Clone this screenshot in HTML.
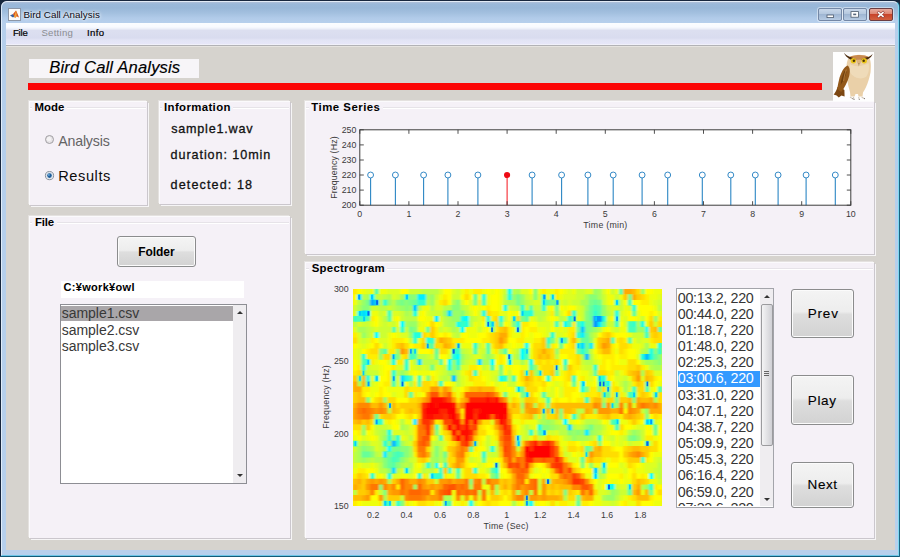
<!DOCTYPE html>
<html><head><meta charset="utf-8"><title>Bird Call Analysis</title><style>
html,body{margin:0;padding:0}
body{width:900px;height:557px;overflow:hidden;position:relative;background:#a9c4e3;font-family:"Liberation Sans",sans-serif}
.abs,.t,.panel,.btn,.lb,.lb>*,.etch{position:absolute}
.t{white-space:nowrap;line-height:1;display:block}
#frame{position:absolute;left:0;top:0;width:897.5px;height:554.5px;border-style:solid;border-color:#17263d #1b6483 #125a78 #17263d;border-width:1px 1.5px 1.5px 1px;border-radius:7px 7px 1px 1px;
 background:linear-gradient(#c5d3e6 0px,#a9bdd8 1.5px,#9ab8d9 3px,#98b7d8 7px,#a3c0df 12px,#b1cbe9 17px,#b6cfec 21px,#b4ceeb 60px,#b7d0ec 100%);}
#frame:before{content:"";position:absolute;left:0;top:0;right:0;bottom:0;border:1px solid rgba(235,243,252,.8);border-right-color:#7fd8f0;border-bottom-color:#6cc6e6;border-radius:6px 6px 0 0}
#corner{position:absolute;left:0;top:0;width:900px;height:8px;background:#16263b}
#bottomline{display:none}
#menubar{position:absolute;left:6px;top:23px;width:888.5px;height:22px;
 background:linear-gradient(#fbfdff 0,#f8faff 4px,#eef1fa 5.5px,#dcdff0 7.5px,#d9dcef 15px,#e2e4f5 17px,#e6e6f8 20.5px,#f6f6fb 22px);border-bottom:1px solid #b2b2b6}
#client{position:absolute;left:6px;top:46px;width:888.5px;height:504px;background:#d6d3ce;box-shadow:inset 0 1px 0 0 #e6e4e0}
#redge{position:absolute;left:894.5px;top:24px;width:1.5px;height:527px;background:#a8e2f2;opacity:.7}
.panel{background:#f5f1f7;box-shadow:inset 1px 1px 0 0 #fbfafc, 1px 1px 0 0 #cbc7cd, 2px 2px 0 0 #f6f5f6, -1px -1px 0 0 #e4e1df}
.etch{height:1px;background:#e6e3e8;border-bottom:1px solid #fff}
.btn{border:1px solid #8b8c8d;border-radius:3px;background:linear-gradient(#f4f4f4 0,#ededed 46%,#dedede 52%,#d2d2d2 100%);box-shadow:inset 0 0 0 1px #fbfbfb}
.lb{background:#fff;border:1px solid #8d8e94;box-sizing:content-box}
.sb{background:#efedf0}
.thumb{border:1px solid #9b9b9e;border-radius:2px;background:linear-gradient(90deg,#f4f4f5,#e2e2e5 50%,#d0d0d5)}
.grip{width:5px;height:1px;background:#666;box-shadow:0 2px 0 #666,0 4px 0 #666}
.arr{width:0;height:0;border-left:3px solid transparent;border-right:3px solid transparent}
.arr.up{border-bottom:3.5px solid #333}
.arr.dn{border-top:3.5px solid #333}
.wb{position:absolute;top:8px;height:11px;width:22px;border:1px solid #7488a6;border-radius:2px;
 background:linear-gradient(#c9d8ea 0,#b4c7de 45%,#9fb6d3 50%,#b7cbe3 100%);box-shadow:0 0 0 1px rgba(255,255,255,.45)}
</style></head><body>
<div id="corner"></div><div id="frame"></div><div id="bottomline"></div>
<svg class="abs" style="left:8px;top:8px" width="13" height="13" viewBox="0 0 13 13"><rect x=".5" y=".5" width="12" height="12" fill="#fbfbfb" stroke="#8c96a6"/>
<path d="M2 7.5L5 6L7 8L5 9.5Z" fill="#3a5f9e"/><path d="M5 6L8 2.5C9 4 10 7 11 9.5L8.5 8.2L7 10L6 8Z" fill="#d9541e"/><path d="M8 2.5C8.6 4.5 8.8 6.5 8.5 8.2L7 10L6.2 8.2Z" fill="#f0a23a"/></svg>
<span class="t " style="left:23.50px;top:10.20px;font-size:9.80px;color:#0a0a14;letter-spacing:0.035px;text-shadow:0 0 3px #fff,0 0 4px #fff;">Bird Call Analysis</span>
<div class="wb" style="left:818px"></div><div class="wb" style="left:843px"></div>
<div class="wb" style="left:869px;border-color:#6b3d42;background:linear-gradient(#e8aa9e 0,#dd8672 45%,#c8442b 50%,#d2603f 100%)"></div>
<svg class="abs" style="left:818px;top:8px" width="76" height="13" viewBox="0 0 76 13">
<rect x="9" y="7" width="6.5" height="2.6" fill="#fff" stroke="#4d5a6c" stroke-width=".8"/>
<rect x="33" y="3.6" width="7.5" height="5.6" fill="#fff" stroke="#4d5a6c" stroke-width=".8"/><rect x="35.2" y="5.6" width="3" height="1.6" fill="#56657a"/>
<path d="M60.6 4.6l4.4 3.8M65 4.6l-4.4 3.8" stroke="#8a3a34" stroke-width="2.6" stroke-linecap="square"/>
<path d="M60.6 4.6l4.4 3.8M65 4.6l-4.4 3.8" stroke="#fff" stroke-width="1.5" stroke-linecap="square"/></svg>
<div id="menubar"></div><div id="client"></div>
<span class="t " style="left:12.90px;top:28.27px;font-size:9.60px;color:#000;letter-spacing:-0.156px;-webkit-text-stroke:0.2px #000;">File</span>
<span class="t " style="left:41.40px;top:28.27px;font-size:9.60px;color:#8b8d92;letter-spacing:0.269px;">Setting</span>
<span class="t " style="left:86.90px;top:28.27px;font-size:9.60px;color:#000;letter-spacing:0.429px;-webkit-text-stroke:0.2px #000;">Info</span>
<div class="abs" style="left:29px;top:59px;width:170px;height:19px;background:#f7f5f8"></div>
<span class="t " style="left:49.20px;top:59.95px;font-size:16.60px;color:#000;font-style:italic;letter-spacing:0.145px;-webkit-text-stroke:0.15px #000;">Bird Call Analysis</span>
<div class="abs" style="left:28px;top:83px;width:794px;height:7px;background:#fb0505"></div>
<div class="panel" style="left:29px;top:101px;width:118px;height:104px"><i class="etch" style="left:1px;width:2px;top:6px"></i><i class="etch" style="left:38px;right:1px;top:6px"></i></div><span class="t " style="left:34.50px;top:101.85px;font-size:11.40px;color:#000;font-weight:bold;letter-spacing:0.045px;">Mode</span>
<div class="panel" style="left:159px;top:101px;width:131px;height:103px"><i class="etch" style="left:1px;width:2px;top:6px"></i><i class="etch" style="left:74px;right:1px;top:6px"></i></div><span class="t " style="left:164.00px;top:101.85px;font-size:11.40px;color:#000;font-weight:bold;letter-spacing:0.381px;">Information</span>
<div class="panel" style="left:29px;top:216px;width:261px;height:322px"><i class="etch" style="left:1px;width:2px;top:6px"></i><i class="etch" style="left:28px;right:1px;top:6px"></i></div><span class="t " style="left:34.90px;top:216.95px;font-size:11.40px;color:#000;font-weight:bold;letter-spacing:-0.113px;">File</span>
<div class="panel" style="left:305px;top:101px;width:569px;height:153px"><i class="etch" style="left:1px;width:3px;top:6px"></i><i class="etch" style="left:78px;right:1px;top:6px"></i></div><span class="t " style="left:311.30px;top:102.15px;font-size:11.40px;color:#000;font-weight:bold;letter-spacing:0.490px;">Time Series</span>
<div class="panel" style="left:305px;top:262px;width:569px;height:276px"><i class="etch" style="left:1px;width:3px;top:6px"></i><i class="etch" style="left:82px;right:1px;top:6px"></i></div><span class="t " style="left:311.70px;top:263.05px;font-size:11.40px;color:#000;font-weight:bold;letter-spacing:0.268px;">Spectrogram</span>
<svg class="abs" style="left:833px;top:52px" width="41" height="49" viewBox="0 0 41 49">
<rect width="41" height="49" fill="#fefefe"/>
<path d="M4.5 35C3.5 38.5 2 41 0.6 42.6L3.6 43.4L5.8 45.4L8.4 43.6L11.6 44.6L11.4 38L8 35.5Z" fill="#7c4712"/>
<path d="M16 5.5C14 8 13.4 12 13.6 16C13.4 24 14.4 32 17 40L17.5 44.5L21.5 44.5L22.5 42L25 42L25.5 44.5L29.5 44.5L30 40.5C33 36 36 29 37.6 20C38.2 13 38 8.5 36 5.4C31 2 21 2 16 5.5Z" fill="#ead0a8"/>
<path d="M17 12C20 15 30 15 35.5 11C36.5 16 36 21 33 25C28 28 20 26 17 20Z" fill="#f1dfc0" opacity=".7"/>
<path d="M14.6 13.6C11 15 7.6 21 6 28C5 32 4.6 35 4.2 37L8.2 40C11.4 36 14.6 30 16.2 24C17.2 20 17.2 15.6 14.6 13.6Z" fill="#93591a"/>
<path d="M11.5 19C9.5 23 8 28 7.6 33C10.5 29 12.6 24 13.6 19.6Z" fill="#6f3f0d"/>
<path d="M13.4 17.5C12 21 11 25 10.6 29" stroke="#b57f3c" stroke-width=".9" fill="none"/>
<path d="M16 5.8C19 2.4 32 2 36.2 5.4C34.4 8 30.5 8.6 26.2 7.8C22 8.6 18 8.4 16 5.8Z" fill="#c98a50"/>
<path d="M23 7C24.5 8.5 27.5 8.5 29 7L27.5 11.5L24.5 11.5Z" fill="#dcb27c"/>
<path d="M11 0.8C13 3.4 15.6 4.8 19 5.4C20.5 5.8 22.5 6.6 23.6 8L17.4 7.4C14 5.8 12 3.4 11 0.8Z" fill="#4a2a0c"/>
<path d="M39.6 1.8C38 4 36 5 33 5.5C31.4 5.8 29.4 6.6 28.2 8L34.4 7.6C37.4 6.2 39 4 39.6 1.8Z" fill="#4a2a0c"/>
<circle cx="20.4" cy="8.7" r="2.7" fill="#e9c417"/><circle cx="31.2" cy="8.7" r="2.7" fill="#e9c417"/>
<circle cx="20.9" cy="8.7" r="1.25" fill="#4d3206"/><circle cx="30.7" cy="8.7" r="1.25" fill="#4d3206"/>
<path d="M25.1 11L26.7 11L25.9 14.6Z" fill="#a98a5e"/>
<path d="M17 45L19.5 46.6M20.4 45L21 47.2M25.6 45L26.2 47.2M28.6 45L31 46.4" stroke="#cfc6b8" stroke-width="1.1" fill="none"/>
<path d="M19.4 46.6l.9.5M21 47.2l.3.7M26.2 47.2l.3.7M31 46.4l.9.4" stroke="#5a5046" stroke-width=".9" fill="none"/>
</svg>
<svg class="abs" style="left:42.8px;top:133.4px" width="14" height="14" viewBox="0 0 14 14"><circle cx="6.5" cy="6.5" r="4.0" fill="#e6e3e6" stroke="#a19fa3" stroke-width="1"/><circle cx="6" cy="5.9" r="2.2" fill="#f4f3f4"/></svg>
<svg class="abs" style="left:42.8px;top:169.4px" width="14" height="14" viewBox="0 0 14 14"><circle cx="6.5" cy="6.6" r="4.1" fill="#dfe5ec" stroke="#8a929c" stroke-width="1"/><circle cx="6.5" cy="6.6" r="2.3" fill="#1d5d9b"/><circle cx="5.9" cy="5.9" r="0.9" fill="#6fb0e0"/></svg>
<span class="t " style="left:58.20px;top:133.58px;font-size:14.20px;color:#646465;letter-spacing:-0.182px;">Analysis</span>
<span class="t " style="left:58.20px;top:169.24px;font-size:14.60px;color:#0c0c0c;letter-spacing:0.586px;">Results</span>
<span class="t " style="left:171.20px;top:122.63px;font-size:12.60px;color:#111;letter-spacing:0.777px;-webkit-text-stroke:0.3px #111;">sample1.wav</span>
<span class="t " style="left:170.60px;top:149.23px;font-size:12.60px;color:#111;letter-spacing:0.918px;-webkit-text-stroke:0.3px #111;">duration: 10min</span>
<span class="t " style="left:170.60px;top:178.73px;font-size:12.60px;color:#111;letter-spacing:1.104px;-webkit-text-stroke:0.3px #111;">detected: 18</span>
<div class="btn" style="left:117.0px;top:236.0px;width:77.0px;height:29.0px"></div><span class="t " style="left:138.20px;top:246.14px;font-size:12.00px;color:#000;font-weight:bold;letter-spacing:-0.054px;">Folder</span>
<div class="abs" style="left:61px;top:281px;width:183px;height:17px;background:#fff"></div>
<span class="t " style="left:63.60px;top:282.29px;font-size:11.00px;color:#000;font-weight:bold;letter-spacing:0.3px;">C:&#165;work&#165;owl</span>
<div class="lb" style="left:60px;top:304px;width:185px;height:178px">
<div class="sel" style="left:0;top:0.5px;width:172px;height:15.5px;background:#a9a6a9"></div>
<div class="sb" style="left:172px;top:0;width:13px;height:178px"></div>
<i class="arr up" style="left:176px;top:6px"></i><i class="arr dn" style="left:176px;top:169px"></i>
</div>
<span class="t " style="left:61.70px;top:306.45px;font-size:14.00px;color:#383838;letter-spacing:-0.031px;">sample1.csv</span>
<span class="t " style="left:61.70px;top:322.80px;font-size:14.00px;color:#383838;letter-spacing:-0.031px;">sample2.csv</span>
<span class="t " style="left:61.70px;top:339.15px;font-size:14.00px;color:#383838;letter-spacing:-0.031px;">sample3.csv</span>
<svg class="abs" style="left:0;top:0" width="900" height="557" viewBox="0 0 900 557">
<rect x="359.8" y="129.8" width="491.0" height="75.4" fill="#fff"/>
<path d="M370.6 205.2V177.9" stroke="#2b86c4" stroke-width="1.1"/>
<circle cx="370.6" cy="175.0" r="2.95" fill="none" stroke="#1f7dbf" stroke-width="0.9"/>
<path d="M395.4 205.2V177.9" stroke="#2b86c4" stroke-width="1.1"/>
<circle cx="395.4" cy="175.0" r="2.95" fill="none" stroke="#1f7dbf" stroke-width="0.9"/>
<path d="M423.6 205.2V177.9" stroke="#2b86c4" stroke-width="1.1"/>
<circle cx="423.6" cy="175.0" r="2.95" fill="none" stroke="#1f7dbf" stroke-width="0.9"/>
<path d="M447.9 205.2V177.9" stroke="#2b86c4" stroke-width="1.1"/>
<circle cx="447.9" cy="175.0" r="2.95" fill="none" stroke="#1f7dbf" stroke-width="0.9"/>
<path d="M477.9 205.2V177.9" stroke="#2b86c4" stroke-width="1.1"/>
<circle cx="477.9" cy="175.0" r="2.95" fill="none" stroke="#1f7dbf" stroke-width="0.9"/>
<path d="M507.1 205.2V175.0" stroke="#f5141c" stroke-width="1"/>
<circle cx="507.1" cy="175.0" r="3.1" fill="#ee0a14"/>
<path d="M532.1 205.2V177.9" stroke="#2b86c4" stroke-width="1.1"/>
<circle cx="532.1" cy="175.0" r="2.95" fill="none" stroke="#1f7dbf" stroke-width="0.9"/>
<path d="M561.6 205.2V177.9" stroke="#2b86c4" stroke-width="1.1"/>
<circle cx="561.6" cy="175.0" r="2.95" fill="none" stroke="#1f7dbf" stroke-width="0.9"/>
<path d="M587.9 205.2V177.9" stroke="#2b86c4" stroke-width="1.1"/>
<circle cx="587.9" cy="175.0" r="2.95" fill="none" stroke="#1f7dbf" stroke-width="0.9"/>
<path d="M613.2 205.2V177.9" stroke="#2b86c4" stroke-width="1.1"/>
<circle cx="613.2" cy="175.0" r="2.95" fill="none" stroke="#1f7dbf" stroke-width="0.9"/>
<path d="M642.1 205.2V177.9" stroke="#2b86c4" stroke-width="1.1"/>
<circle cx="642.1" cy="175.0" r="2.95" fill="none" stroke="#1f7dbf" stroke-width="0.9"/>
<path d="M667.7 205.2V177.9" stroke="#2b86c4" stroke-width="1.1"/>
<circle cx="667.7" cy="175.0" r="2.95" fill="none" stroke="#1f7dbf" stroke-width="0.9"/>
<path d="M702.3 205.2V177.9" stroke="#2b86c4" stroke-width="1.1"/>
<circle cx="702.3" cy="175.0" r="2.95" fill="none" stroke="#1f7dbf" stroke-width="0.9"/>
<path d="M730.8 205.2V177.9" stroke="#2b86c4" stroke-width="1.1"/>
<circle cx="730.8" cy="175.0" r="2.95" fill="none" stroke="#1f7dbf" stroke-width="0.9"/>
<path d="M755.3 205.2V177.9" stroke="#2b86c4" stroke-width="1.1"/>
<circle cx="755.3" cy="175.0" r="2.95" fill="none" stroke="#1f7dbf" stroke-width="0.9"/>
<path d="M778.1 205.2V177.9" stroke="#2b86c4" stroke-width="1.1"/>
<circle cx="778.1" cy="175.0" r="2.95" fill="none" stroke="#1f7dbf" stroke-width="0.9"/>
<path d="M806.1 205.2V177.9" stroke="#2b86c4" stroke-width="1.1"/>
<circle cx="806.1" cy="175.0" r="2.95" fill="none" stroke="#1f7dbf" stroke-width="0.9"/>
<path d="M835.3 205.2V177.9" stroke="#2b86c4" stroke-width="1.1"/>
<circle cx="835.3" cy="175.0" r="2.95" fill="none" stroke="#1f7dbf" stroke-width="0.9"/>
<path d="M359.8 205.2v-4M359.8 129.8v4M408.9 205.2v-4M408.9 129.8v4M458.0 205.2v-4M458.0 129.8v4M507.1 205.2v-4M507.1 129.8v4M556.2 205.2v-4M556.2 129.8v4M605.3 205.2v-4M605.3 129.8v4M654.4 205.2v-4M654.4 129.8v4M703.5 205.2v-4M703.5 129.8v4M752.6 205.2v-4M752.6 129.8v4M801.7 205.2v-4M801.7 129.8v4M850.8 205.2v-4M850.8 129.8v4M359.8 205.2h4M850.8 205.2h-4M359.8 190.1h4M850.8 190.1h-4M359.8 175.0h4M850.8 175.0h-4M359.8 160.0h4M850.8 160.0h-4M359.8 144.9h4M850.8 144.9h-4M359.8 129.8h4M850.8 129.8h-4" stroke="#3c3c3c" stroke-width="0.9" fill="none"/>
<rect x="359.8" y="129.8" width="491.0" height="75.4" fill="none" stroke="#3c3c3c" stroke-width="1"/>
<g font-family="Liberation Sans, sans-serif" font-size="8.8" fill="#3a3a3a">
<text x="359.8" y="217.2" text-anchor="middle">0</text>
<text x="408.9" y="217.2" text-anchor="middle">1</text>
<text x="458.0" y="217.2" text-anchor="middle">2</text>
<text x="507.1" y="217.2" text-anchor="middle">3</text>
<text x="556.2" y="217.2" text-anchor="middle">4</text>
<text x="605.3" y="217.2" text-anchor="middle">5</text>
<text x="654.4" y="217.2" text-anchor="middle">6</text>
<text x="703.5" y="217.2" text-anchor="middle">7</text>
<text x="752.6" y="217.2" text-anchor="middle">8</text>
<text x="801.7" y="217.2" text-anchor="middle">9</text>
<text x="850.8" y="217.2" text-anchor="middle">10</text>
<text x="356.4" y="208.3" text-anchor="end">200</text>
<text x="356.4" y="193.2" text-anchor="end">210</text>
<text x="356.4" y="178.1" text-anchor="end">220</text>
<text x="356.4" y="163.1" text-anchor="end">230</text>
<text x="356.4" y="148.0" text-anchor="end">240</text>
<text x="356.4" y="132.9" text-anchor="end">250</text>
<text x="605.3" y="228.2" text-anchor="middle" textLength="44">Time (min)</text>
<text transform="translate(336.8 167.6) rotate(-90)" text-anchor="middle" textLength="62.5">Frequency (Hz)</text>
</g>
</svg>
<svg class="abs" style="left:352.5px;top:288.5px" width="309.0" height="217.0" viewBox="0 0 309.0 217.0">
<defs><filter id="bl" x="-5%" y="-5%" width="110%" height="110%"><feGaussianBlur stdDeviation="0.85 0.75"/></filter><filter id="bl2"><feGaussianBlur stdDeviation="0.45 0.6"/></filter></defs>
<rect x="-5" y="-5" width="330" height="240" fill="#fe0"/>
<g filter="url(#bl)">
<path fill="#fe0" d="M-0.2 -0.2h4.7v5.8h-4.7zM111.4 -0.2h4.7v5.8h-4.7zM120.0 -0.2h9.0v5.8h-9.0zM188.6 -0.2h4.7v5.8h-4.7zM201.5 -0.2h4.7v5.8h-4.7zM89.9 5.2h4.7v5.8h-4.7zM201.5 5.2h4.7v5.8h-4.7zM291.6 5.2h4.7v5.8h-4.7zM85.6 10.7h4.7v5.8h-4.7zM124.3 10.7h4.7v5.8h-4.7zM287.3 10.7h9.0v5.8h-9.0zM132.8 16.1h4.7v5.8h-4.7zM137.1 21.5h9.0v5.8h-9.0zM197.2 21.5h4.7v5.8h-4.7zM295.9 21.5h4.7v5.8h-4.7zM17.0 26.9h4.7v5.8h-4.7zM128.6 26.9h4.7v5.8h-4.7zM137.1 26.9h4.7v5.8h-4.7zM304.5 26.9h4.7v5.8h-4.7zM167.2 32.3h9.0v5.8h-9.0zM218.7 32.3h4.7v5.8h-4.7zM81.3 37.8h4.7v5.8h-4.7zM141.4 37.8h4.7v5.8h-4.7zM154.3 37.8h4.7v5.8h-4.7zM167.2 37.8h4.7v5.8h-4.7zM175.8 37.8h9.0v5.8h-9.0zM214.4 37.8h9.0v5.8h-9.0zM-0.2 43.2h4.7v5.8h-4.7zM72.8 43.2h4.7v5.8h-4.7zM81.3 43.2h4.7v5.8h-4.7zM89.9 43.2h4.7v5.8h-4.7zM132.8 43.2h4.7v5.8h-4.7zM154.3 43.2h4.7v5.8h-4.7zM167.2 43.2h4.7v5.8h-4.7zM214.4 43.2h4.7v5.8h-4.7zM257.3 43.2h4.7v5.8h-4.7zM17.0 48.6h4.7v5.8h-4.7zM38.4 48.6h13.3v5.8h-13.3zM98.5 48.6h13.3v5.8h-13.3zM128.6 48.6h9.0v5.8h-9.0zM162.9 48.6h9.0v5.8h-9.0zM180.1 48.6h9.0v5.8h-9.0zM214.4 48.6h4.7v5.8h-4.7zM261.6 48.6h4.7v5.8h-4.7zM270.2 48.6h4.7v5.8h-4.7zM295.9 48.6h4.7v5.8h-4.7zM38.4 54.0h4.7v5.8h-4.7zM59.9 54.0h9.0v5.8h-9.0zM137.1 54.0h4.7v5.8h-4.7zM150.0 54.0h4.7v5.8h-4.7zM197.2 54.0h4.7v5.8h-4.7zM214.4 54.0h4.7v5.8h-4.7zM257.3 54.0h4.7v5.8h-4.7zM274.5 54.0h4.7v5.8h-4.7zM12.7 59.5h4.7v5.8h-4.7zM34.1 59.5h9.0v5.8h-9.0zM77.0 59.5h4.7v5.8h-4.7zM141.4 59.5h4.7v5.8h-4.7zM205.8 59.5h17.6v5.8h-17.6zM257.3 59.5h4.7v5.8h-4.7zM270.2 59.5h4.7v5.8h-4.7zM12.7 64.9h13.3v5.8h-13.3zM47.0 64.9h4.7v5.8h-4.7zM145.7 64.9h4.7v5.8h-4.7zM214.4 64.9h9.0v5.8h-9.0zM248.7 64.9h13.3v5.8h-13.3zM265.9 64.9h9.0v5.8h-9.0zM17.0 70.3h4.7v5.8h-4.7zM42.7 70.3h9.0v5.8h-9.0zM145.7 70.3h4.7v5.8h-4.7zM180.1 70.3h4.7v5.8h-4.7zM188.6 70.3h4.7v5.8h-4.7zM197.2 70.3h4.7v5.8h-4.7zM218.7 70.3h4.7v5.8h-4.7zM248.7 70.3h4.7v5.8h-4.7zM257.3 70.3h4.7v5.8h-4.7zM4.1 75.8h4.7v5.8h-4.7zM38.4 75.8h4.7v5.8h-4.7zM115.7 75.8h9.0v5.8h-9.0zM184.3 75.8h4.7v5.8h-4.7zM218.7 75.8h9.0v5.8h-9.0zM244.4 75.8h9.0v5.8h-9.0zM257.3 75.8h17.6v5.8h-17.6zM287.3 75.8h4.7v5.8h-4.7zM-0.2 81.2h4.7v5.8h-4.7zM34.1 81.2h4.7v5.8h-4.7zM111.4 81.2h4.7v5.8h-4.7zM124.3 81.2h4.7v5.8h-4.7zM210.1 81.2h4.7v5.8h-4.7zM218.7 81.2h4.7v5.8h-4.7zM253.0 81.2h9.0v5.8h-9.0zM270.2 81.2h4.7v5.8h-4.7zM34.1 86.6h4.7v5.8h-4.7zM77.0 86.6h4.7v5.8h-4.7zM120.0 86.6h9.0v5.8h-9.0zM180.1 86.6h4.7v5.8h-4.7zM197.2 86.6h4.7v5.8h-4.7zM210.1 86.6h4.7v5.8h-4.7zM227.3 86.6h4.7v5.8h-4.7zM253.0 86.6h4.7v5.8h-4.7zM300.2 86.6h4.7v5.8h-4.7zM29.8 92.0h9.0v5.8h-9.0zM59.9 92.0h4.7v5.8h-4.7zM77.0 92.0h4.7v5.8h-4.7zM120.0 92.0h13.3v5.8h-13.3zM167.2 92.0h4.7v5.8h-4.7zM180.1 92.0h9.0v5.8h-9.0zM210.1 92.0h4.7v5.8h-4.7zM257.3 92.0h4.7v5.8h-4.7zM278.8 92.0h4.7v5.8h-4.7zM8.4 97.4h9.0v5.8h-9.0zM25.6 97.4h4.7v5.8h-4.7zM55.6 97.4h13.3v5.8h-13.3zM141.4 97.4h4.7v5.8h-4.7zM188.6 97.4h4.7v5.8h-4.7zM210.1 97.4h13.3v5.8h-13.3zM235.8 97.4h9.0v5.8h-9.0zM257.3 97.4h4.7v5.8h-4.7zM8.4 102.9h4.7v5.8h-4.7zM25.6 102.9h4.7v5.8h-4.7zM59.9 102.9h4.7v5.8h-4.7zM145.7 102.9h4.7v5.8h-4.7zM210.1 102.9h9.0v5.8h-9.0zM231.6 102.9h13.3v5.8h-13.3zM257.3 102.9h4.7v5.8h-4.7zM265.9 102.9h4.7v5.8h-4.7zM283.1 102.9h4.7v5.8h-4.7zM102.8 108.3h4.7v5.8h-4.7zM162.9 108.3h4.7v5.8h-4.7zM201.5 108.3h4.7v5.8h-4.7zM214.4 108.3h4.7v5.8h-4.7zM223.0 108.3h9.0v5.8h-9.0zM47.0 119.1h4.7v5.8h-4.7zM107.1 119.1h4.7v5.8h-4.7zM51.3 124.6h4.7v5.8h-4.7zM158.6 124.6h9.0v5.8h-9.0zM184.3 124.6h4.7v5.8h-4.7zM231.6 124.6h13.3v5.8h-13.3zM265.9 124.6h4.7v5.8h-4.7zM304.5 124.6h4.7v5.8h-4.7zM34.1 130.0h4.7v5.8h-4.7zM81.3 130.0h4.7v5.8h-4.7zM167.2 130.0h4.7v5.8h-4.7zM274.5 130.0h4.7v5.8h-4.7zM283.1 130.0h4.7v5.8h-4.7zM59.9 135.4h4.7v5.8h-4.7zM128.6 135.4h4.7v5.8h-4.7zM137.1 135.4h4.7v5.8h-4.7zM4.1 140.8h4.7v5.8h-4.7zM59.9 140.8h4.7v5.8h-4.7zM265.9 140.8h4.7v5.8h-4.7zM59.9 146.3h4.7v5.8h-4.7zM89.9 146.3h4.7v5.8h-4.7zM124.3 146.3h4.7v5.8h-4.7zM141.4 146.3h4.7v5.8h-4.7zM197.2 146.3h9.0v5.8h-9.0zM291.6 146.3h9.0v5.8h-9.0zM94.2 151.7h4.7v5.8h-4.7zM124.3 151.7h4.7v5.8h-4.7zM214.4 151.7h9.0v5.8h-9.0zM235.8 151.7h4.7v5.8h-4.7zM120.0 157.1h4.7v5.8h-4.7zM205.8 157.1h4.7v5.8h-4.7zM223.0 157.1h4.7v5.8h-4.7zM257.3 157.1h4.7v5.8h-4.7zM59.9 162.6h4.7v5.8h-4.7zM227.3 162.6h4.7v5.8h-4.7zM72.8 168.0h4.7v5.8h-4.7zM111.4 168.0h4.7v5.8h-4.7zM145.7 168.0h4.7v5.8h-4.7zM248.7 168.0h4.7v5.8h-4.7zM257.3 168.0h9.0v5.8h-9.0zM270.2 168.0h4.7v5.8h-4.7zM291.6 168.0h4.7v5.8h-4.7zM111.4 173.4h4.7v5.8h-4.7zM145.7 173.4h4.7v5.8h-4.7zM180.1 173.4h4.7v5.8h-4.7zM188.6 173.4h4.7v5.8h-4.7zM218.7 173.4h4.7v5.8h-4.7zM278.8 173.4h4.7v5.8h-4.7zM4.1 178.8h9.0v5.8h-9.0zM278.8 178.8h4.7v5.8h-4.7zM-0.2 184.2h4.7v5.8h-4.7zM12.7 184.2h4.7v5.8h-4.7zM68.5 184.2h4.7v5.8h-4.7zM89.9 184.2h4.7v5.8h-4.7zM124.3 184.2h9.0v5.8h-9.0zM154.3 184.2h4.7v5.8h-4.7zM265.9 184.2h4.7v5.8h-4.7zM287.3 184.2h4.7v5.8h-4.7zM171.5 189.7h4.7v5.8h-4.7zM42.7 195.1h4.7v5.8h-4.7zM300.2 195.1h4.7v5.8h-4.7zM21.3 200.5h4.7v5.8h-4.7zM77.0 200.5h4.7v5.8h-4.7zM145.7 200.5h4.7v5.8h-4.7zM154.3 200.5h4.7v5.8h-4.7zM223.0 200.5h4.7v5.8h-4.7zM274.5 206.0h4.7v5.8h-4.7zM295.9 206.0h4.7v5.8h-4.7zM-0.2 211.4h4.7v5.8h-4.7zM25.6 211.4h4.7v5.8h-4.7zM51.3 211.4h4.7v5.8h-4.7zM72.8 211.4h9.0v5.8h-9.0zM107.1 211.4h4.7v5.8h-4.7zM128.6 211.4h4.7v5.8h-4.7zM137.1 211.4h9.0v5.8h-9.0zM205.8 211.4h9.0v5.8h-9.0zM227.3 211.4h9.0v5.8h-9.0zM270.2 211.4h4.7v5.8h-4.7z"/>
<path fill="#ff0" d="M4.1 -0.2h4.7v5.8h-4.7zM47.0 -0.2h9.0v5.8h-9.0zM89.9 -0.2h9.0v5.8h-9.0zM132.8 -0.2h4.7v5.8h-4.7zM141.4 -0.2h4.7v5.8h-4.7zM175.8 -0.2h4.7v5.8h-4.7zM205.8 -0.2h4.7v5.8h-4.7zM253.0 -0.2h4.7v5.8h-4.7zM291.6 -0.2h9.0v5.8h-9.0zM-0.2 5.2h4.7v5.8h-4.7zM94.2 5.2h4.7v5.8h-4.7zM107.1 5.2h4.7v5.8h-4.7zM115.7 5.2h4.7v5.8h-4.7zM124.3 5.2h4.7v5.8h-4.7zM137.1 5.2h9.0v5.8h-9.0zM94.2 10.7h4.7v5.8h-4.7zM111.4 10.7h4.7v5.8h-4.7zM137.1 10.7h9.0v5.8h-9.0zM257.3 10.7h4.7v5.8h-4.7zM270.2 10.7h4.7v5.8h-4.7zM278.8 10.7h9.0v5.8h-9.0zM120.0 16.1h4.7v5.8h-4.7zM128.6 16.1h4.7v5.8h-4.7zM137.1 16.1h9.0v5.8h-9.0zM197.2 16.1h4.7v5.8h-4.7zM205.8 16.1h4.7v5.8h-4.7zM214.4 16.1h9.0v5.8h-9.0zM283.1 16.1h17.6v5.8h-17.6zM68.5 21.5h4.7v5.8h-4.7zM120.0 21.5h4.7v5.8h-4.7zM154.3 21.5h4.7v5.8h-4.7zM162.9 21.5h4.7v5.8h-4.7zM210.1 21.5h4.7v5.8h-4.7zM274.5 21.5h4.7v5.8h-4.7zM287.3 21.5h9.0v5.8h-9.0zM300.2 21.5h4.7v5.8h-4.7zM21.3 26.9h4.7v5.8h-4.7zM42.7 26.9h4.7v5.8h-4.7zM64.2 26.9h9.0v5.8h-9.0zM154.3 26.9h4.7v5.8h-4.7zM197.2 26.9h4.7v5.8h-4.7zM257.3 26.9h4.7v5.8h-4.7zM274.5 26.9h9.0v5.8h-9.0zM291.6 26.9h4.7v5.8h-4.7zM21.3 32.3h4.7v5.8h-4.7zM72.8 32.3h4.7v5.8h-4.7zM81.3 32.3h4.7v5.8h-4.7zM128.6 32.3h4.7v5.8h-4.7zM150.0 32.3h4.7v5.8h-4.7zM175.8 32.3h9.0v5.8h-9.0zM265.9 32.3h4.7v5.8h-4.7zM132.8 37.8h4.7v5.8h-4.7zM171.5 37.8h4.7v5.8h-4.7zM197.2 37.8h4.7v5.8h-4.7zM253.0 37.8h4.7v5.8h-4.7zM38.4 43.2h4.7v5.8h-4.7zM85.6 43.2h4.7v5.8h-4.7zM94.2 43.2h4.7v5.8h-4.7zM107.1 43.2h9.0v5.8h-9.0zM124.3 43.2h9.0v5.8h-9.0zM171.5 43.2h4.7v5.8h-4.7zM180.1 43.2h9.0v5.8h-9.0zM244.4 43.2h4.7v5.8h-4.7zM261.6 43.2h13.3v5.8h-13.3zM21.3 48.6h4.7v5.8h-4.7zM51.3 48.6h4.7v5.8h-4.7zM111.4 48.6h17.6v5.8h-17.6zM154.3 48.6h9.0v5.8h-9.0zM-0.2 54.0h4.7v5.8h-4.7zM17.0 54.0h4.7v5.8h-4.7zM25.6 54.0h4.7v5.8h-4.7zM55.6 54.0h4.7v5.8h-4.7zM158.6 54.0h4.7v5.8h-4.7zM175.8 54.0h4.7v5.8h-4.7zM201.5 54.0h4.7v5.8h-4.7zM210.1 54.0h4.7v5.8h-4.7zM261.6 54.0h4.7v5.8h-4.7zM8.4 59.5h4.7v5.8h-4.7zM64.2 59.5h13.3v5.8h-13.3zM154.3 59.5h4.7v5.8h-4.7zM240.1 59.5h4.7v5.8h-4.7zM274.5 59.5h9.0v5.8h-9.0zM85.6 64.9h9.0v5.8h-9.0zM150.0 64.9h4.7v5.8h-4.7zM205.8 64.9h9.0v5.8h-9.0zM244.4 64.9h4.7v5.8h-4.7zM261.6 64.9h4.7v5.8h-4.7zM274.5 64.9h9.0v5.8h-9.0zM-0.2 70.3h4.7v5.8h-4.7zM25.6 70.3h9.0v5.8h-9.0zM89.9 70.3h4.7v5.8h-4.7zM141.4 70.3h4.7v5.8h-4.7zM150.0 70.3h4.7v5.8h-4.7zM205.8 70.3h4.7v5.8h-4.7zM214.4 70.3h4.7v5.8h-4.7zM253.0 70.3h4.7v5.8h-4.7zM261.6 70.3h4.7v5.8h-4.7zM283.1 70.3h4.7v5.8h-4.7zM-0.2 75.8h4.7v5.8h-4.7zM29.8 75.8h9.0v5.8h-9.0zM124.3 75.8h4.7v5.8h-4.7zM141.4 75.8h4.7v5.8h-4.7zM150.0 75.8h4.7v5.8h-4.7zM158.6 75.8h9.0v5.8h-9.0zM205.8 75.8h4.7v5.8h-4.7zM253.0 75.8h4.7v5.8h-4.7zM29.8 81.2h4.7v5.8h-4.7zM59.9 81.2h4.7v5.8h-4.7zM77.0 81.2h4.7v5.8h-4.7zM150.0 81.2h4.7v5.8h-4.7zM158.6 81.2h9.0v5.8h-9.0zM223.0 81.2h4.7v5.8h-4.7zM25.6 86.6h9.0v5.8h-9.0zM59.9 86.6h4.7v5.8h-4.7zM68.5 86.6h4.7v5.8h-4.7zM128.6 86.6h4.7v5.8h-4.7zM162.9 86.6h4.7v5.8h-4.7zM188.6 86.6h4.7v5.8h-4.7zM201.5 86.6h9.0v5.8h-9.0zM223.0 86.6h4.7v5.8h-4.7zM240.1 86.6h4.7v5.8h-4.7zM257.3 86.6h4.7v5.8h-4.7zM304.5 86.6h4.7v5.8h-4.7zM25.6 92.0h4.7v5.8h-4.7zM51.3 92.0h4.7v5.8h-4.7zM89.9 92.0h9.0v5.8h-9.0zM137.1 92.0h4.7v5.8h-4.7zM150.0 92.0h4.7v5.8h-4.7zM162.9 92.0h4.7v5.8h-4.7zM192.9 92.0h4.7v5.8h-4.7zM214.4 92.0h4.7v5.8h-4.7zM223.0 92.0h4.7v5.8h-4.7zM240.1 92.0h4.7v5.8h-4.7zM300.2 92.0h4.7v5.8h-4.7zM29.8 97.4h4.7v5.8h-4.7zM107.1 97.4h4.7v5.8h-4.7zM154.3 97.4h4.7v5.8h-4.7zM184.3 97.4h4.7v5.8h-4.7zM201.5 97.4h4.7v5.8h-4.7zM223.0 97.4h4.7v5.8h-4.7zM300.2 97.4h4.7v5.8h-4.7zM12.7 102.9h4.7v5.8h-4.7zM21.3 102.9h4.7v5.8h-4.7zM29.8 102.9h9.0v5.8h-9.0zM68.5 102.9h4.7v5.8h-4.7zM162.9 102.9h4.7v5.8h-4.7zM180.1 102.9h4.7v5.8h-4.7zM201.5 102.9h4.7v5.8h-4.7zM218.7 102.9h9.0v5.8h-9.0zM295.9 102.9h4.7v5.8h-4.7zM17.0 108.3h4.7v5.8h-4.7zM42.7 108.3h13.3v5.8h-13.3zM197.2 108.3h4.7v5.8h-4.7zM205.8 108.3h9.0v5.8h-9.0zM218.7 108.3h4.7v5.8h-4.7zM270.2 119.1h4.7v5.8h-4.7zM42.7 124.6h9.0v5.8h-9.0zM59.9 124.6h4.7v5.8h-4.7zM214.4 124.6h4.7v5.8h-4.7zM295.9 124.6h4.7v5.8h-4.7zM38.4 130.0h4.7v5.8h-4.7zM223.0 130.0h4.7v5.8h-4.7zM248.7 130.0h4.7v5.8h-4.7zM287.3 130.0h4.7v5.8h-4.7zM17.0 135.4h4.7v5.8h-4.7zM38.4 135.4h9.0v5.8h-9.0zM132.8 135.4h4.7v5.8h-4.7zM162.9 135.4h4.7v5.8h-4.7zM270.2 135.4h9.0v5.8h-9.0zM291.6 135.4h4.7v5.8h-4.7zM304.5 135.4h4.7v5.8h-4.7zM-0.2 140.8h4.7v5.8h-4.7zM12.7 140.8h4.7v5.8h-4.7zM132.8 140.8h9.0v5.8h-9.0zM257.3 140.8h9.0v5.8h-9.0zM291.6 140.8h9.0v5.8h-9.0zM304.5 140.8h4.7v5.8h-4.7zM4.1 146.3h4.7v5.8h-4.7zM17.0 146.3h4.7v5.8h-4.7zM77.0 146.3h4.7v5.8h-4.7zM128.6 146.3h4.7v5.8h-4.7zM304.5 146.3h4.7v5.8h-4.7zM223.0 151.7h4.7v5.8h-4.7zM248.7 151.7h9.0v5.8h-9.0zM287.3 151.7h4.7v5.8h-4.7zM304.5 151.7h4.7v5.8h-4.7zM124.3 157.1h9.0v5.8h-9.0zM261.6 157.1h9.0v5.8h-9.0zM304.5 157.1h4.7v5.8h-4.7zM120.0 162.6h4.7v5.8h-4.7zM218.7 162.6h4.7v5.8h-4.7zM265.9 162.6h4.7v5.8h-4.7zM295.9 162.6h4.7v5.8h-4.7zM141.4 168.0h4.7v5.8h-4.7zM265.9 168.0h4.7v5.8h-4.7zM295.9 168.0h4.7v5.8h-4.7zM64.2 173.4h4.7v5.8h-4.7zM85.6 173.4h4.7v5.8h-4.7zM115.7 173.4h9.0v5.8h-9.0zM132.8 173.4h9.0v5.8h-9.0zM184.3 173.4h4.7v5.8h-4.7zM223.0 173.4h4.7v5.8h-4.7zM231.6 173.4h4.7v5.8h-4.7zM253.0 173.4h13.3v5.8h-13.3zM283.1 173.4h4.7v5.8h-4.7zM12.7 178.8h9.0v5.8h-9.0zM145.7 178.8h9.0v5.8h-9.0zM188.6 178.8h4.7v5.8h-4.7zM227.3 178.8h13.3v5.8h-13.3zM274.5 178.8h4.7v5.8h-4.7zM25.6 184.2h4.7v5.8h-4.7zM59.9 184.2h4.7v5.8h-4.7zM132.8 184.2h4.7v5.8h-4.7zM150.0 184.2h4.7v5.8h-4.7zM180.1 184.2h9.0v5.8h-9.0zM192.9 184.2h4.7v5.8h-4.7zM253.0 184.2h13.3v5.8h-13.3zM274.5 184.2h4.7v5.8h-4.7zM283.1 184.2h4.7v5.8h-4.7zM291.6 184.2h4.7v5.8h-4.7zM240.1 189.7h4.7v5.8h-4.7zM253.0 189.7h4.7v5.8h-4.7zM265.9 189.7h4.7v5.8h-4.7zM248.7 195.1h4.7v5.8h-4.7zM304.5 195.1h4.7v5.8h-4.7zM300.2 200.5h4.7v5.8h-4.7zM17.0 206.0h9.0v5.8h-9.0zM132.8 206.0h4.7v5.8h-4.7zM150.0 206.0h4.7v5.8h-4.7zM300.2 206.0h9.0v5.8h-9.0zM4.1 211.4h4.7v5.8h-4.7zM59.9 211.4h4.7v5.8h-4.7zM85.6 211.4h4.7v5.8h-4.7zM98.5 211.4h4.7v5.8h-4.7zM124.3 211.4h4.7v5.8h-4.7zM145.7 211.4h13.3v5.8h-13.3zM167.2 211.4h4.7v5.8h-4.7zM184.3 211.4h9.0v5.8h-9.0zM235.8 211.4h4.7v5.8h-4.7zM265.9 211.4h4.7v5.8h-4.7zM287.3 211.4h13.3v5.8h-13.3z"/>
<path fill="#ef1" d="M8.4 -0.2h4.7v5.8h-4.7zM17.0 -0.2h4.7v5.8h-4.7zM25.6 -0.2h9.0v5.8h-9.0zM107.1 -0.2h4.7v5.8h-4.7zM115.7 -0.2h4.7v5.8h-4.7zM128.6 -0.2h4.7v5.8h-4.7zM137.1 -0.2h4.7v5.8h-4.7zM145.7 -0.2h4.7v5.8h-4.7zM184.3 -0.2h4.7v5.8h-4.7zM192.9 -0.2h9.0v5.8h-9.0zM210.1 -0.2h4.7v5.8h-4.7zM218.7 -0.2h4.7v5.8h-4.7zM261.6 -0.2h4.7v5.8h-4.7zM300.2 -0.2h9.0v5.8h-9.0zM85.6 5.2h4.7v5.8h-4.7zM132.8 5.2h4.7v5.8h-4.7zM145.7 5.2h4.7v5.8h-4.7zM192.9 5.2h4.7v5.8h-4.7zM205.8 5.2h4.7v5.8h-4.7zM253.0 5.2h9.0v5.8h-9.0zM265.9 5.2h4.7v5.8h-4.7zM295.9 5.2h9.0v5.8h-9.0zM-0.2 10.7h4.7v5.8h-4.7zM132.8 10.7h4.7v5.8h-4.7zM145.7 10.7h4.7v5.8h-4.7zM253.0 10.7h4.7v5.8h-4.7zM295.9 10.7h4.7v5.8h-4.7zM68.5 16.1h9.0v5.8h-9.0zM115.7 16.1h4.7v5.8h-4.7zM124.3 16.1h4.7v5.8h-4.7zM145.7 16.1h4.7v5.8h-4.7zM192.9 16.1h4.7v5.8h-4.7zM210.1 16.1h4.7v5.8h-4.7zM270.2 16.1h4.7v5.8h-4.7zM300.2 16.1h4.7v5.8h-4.7zM17.0 21.5h9.0v5.8h-9.0zM64.2 21.5h4.7v5.8h-4.7zM145.7 21.5h4.7v5.8h-4.7zM158.6 21.5h4.7v5.8h-4.7zM270.2 21.5h4.7v5.8h-4.7zM283.1 21.5h4.7v5.8h-4.7zM38.4 26.9h4.7v5.8h-4.7zM72.8 26.9h9.0v5.8h-9.0zM175.8 26.9h4.7v5.8h-4.7zM192.9 26.9h4.7v5.8h-4.7zM201.5 26.9h4.7v5.8h-4.7zM223.0 26.9h4.7v5.8h-4.7zM265.9 26.9h4.7v5.8h-4.7zM283.1 26.9h4.7v5.8h-4.7zM17.0 32.3h4.7v5.8h-4.7zM42.7 32.3h4.7v5.8h-4.7zM68.5 32.3h4.7v5.8h-4.7zM85.6 32.3h4.7v5.8h-4.7zM120.0 32.3h4.7v5.8h-4.7zM154.3 32.3h4.7v5.8h-4.7zM197.2 32.3h4.7v5.8h-4.7zM205.8 32.3h4.7v5.8h-4.7zM291.6 32.3h4.7v5.8h-4.7zM64.2 37.8h9.0v5.8h-9.0zM111.4 37.8h13.3v5.8h-13.3zM128.6 37.8h4.7v5.8h-4.7zM158.6 37.8h4.7v5.8h-4.7zM184.3 37.8h9.0v5.8h-9.0zM205.8 37.8h4.7v5.8h-4.7zM248.7 37.8h4.7v5.8h-4.7zM265.9 37.8h9.0v5.8h-9.0zM34.1 43.2h4.7v5.8h-4.7zM42.7 43.2h4.7v5.8h-4.7zM115.7 43.2h9.0v5.8h-9.0zM158.6 43.2h9.0v5.8h-9.0zM175.8 43.2h4.7v5.8h-4.7zM188.6 43.2h4.7v5.8h-4.7zM210.1 43.2h4.7v5.8h-4.7zM274.5 43.2h4.7v5.8h-4.7zM34.1 48.6h4.7v5.8h-4.7zM64.2 48.6h4.7v5.8h-4.7zM171.5 48.6h9.0v5.8h-9.0zM240.1 48.6h4.7v5.8h-4.7zM278.8 48.6h4.7v5.8h-4.7zM4.1 54.0h4.7v5.8h-4.7zM12.7 54.0h4.7v5.8h-4.7zM34.1 54.0h4.7v5.8h-4.7zM107.1 54.0h13.3v5.8h-13.3zM128.6 54.0h4.7v5.8h-4.7zM154.3 54.0h4.7v5.8h-4.7zM162.9 54.0h9.0v5.8h-9.0zM240.1 54.0h4.7v5.8h-4.7zM278.8 54.0h9.0v5.8h-9.0zM295.9 54.0h9.0v5.8h-9.0zM-0.2 59.5h4.7v5.8h-4.7zM94.2 59.5h4.7v5.8h-4.7zM137.1 59.5h4.7v5.8h-4.7zM175.8 59.5h4.7v5.8h-4.7zM261.6 59.5h4.7v5.8h-4.7zM283.1 59.5h4.7v5.8h-4.7zM-0.2 64.9h4.7v5.8h-4.7zM141.4 64.9h4.7v5.8h-4.7zM175.8 64.9h4.7v5.8h-4.7zM240.1 64.9h4.7v5.8h-4.7zM4.1 70.3h4.7v5.8h-4.7zM21.3 70.3h4.7v5.8h-4.7zM55.6 70.3h4.7v5.8h-4.7zM244.4 70.3h4.7v5.8h-4.7zM265.9 70.3h9.0v5.8h-9.0zM25.6 75.8h4.7v5.8h-4.7zM55.6 75.8h4.7v5.8h-4.7zM154.3 75.8h4.7v5.8h-4.7zM167.2 75.8h9.0v5.8h-9.0zM291.6 75.8h4.7v5.8h-4.7zM25.6 81.2h4.7v5.8h-4.7zM55.6 81.2h4.7v5.8h-4.7zM64.2 81.2h13.3v5.8h-13.3zM81.3 81.2h4.7v5.8h-4.7zM107.1 81.2h4.7v5.8h-4.7zM128.6 81.2h9.0v5.8h-9.0zM205.8 81.2h4.7v5.8h-4.7zM227.3 81.2h9.0v5.8h-9.0zM265.9 81.2h4.7v5.8h-4.7zM17.0 86.6h4.7v5.8h-4.7zM81.3 86.6h4.7v5.8h-4.7zM111.4 86.6h4.7v5.8h-4.7zM132.8 86.6h4.7v5.8h-4.7zM231.6 86.6h4.7v5.8h-4.7zM274.5 86.6h4.7v5.8h-4.7zM21.3 92.0h4.7v5.8h-4.7zM98.5 92.0h4.7v5.8h-4.7zM111.4 92.0h9.0v5.8h-9.0zM132.8 92.0h4.7v5.8h-4.7zM145.7 92.0h4.7v5.8h-4.7zM197.2 92.0h4.7v5.8h-4.7zM205.8 92.0h4.7v5.8h-4.7zM231.6 92.0h9.0v5.8h-9.0zM261.6 92.0h4.7v5.8h-4.7zM304.5 92.0h4.7v5.8h-4.7zM17.0 97.4h9.0v5.8h-9.0zM34.1 97.4h17.6v5.8h-17.6zM102.8 97.4h4.7v5.8h-4.7zM145.7 97.4h9.0v5.8h-9.0zM158.6 97.4h4.7v5.8h-4.7zM192.9 97.4h4.7v5.8h-4.7zM265.9 97.4h4.7v5.8h-4.7zM295.9 97.4h4.7v5.8h-4.7zM17.0 102.9h4.7v5.8h-4.7zM42.7 102.9h9.0v5.8h-9.0zM64.2 102.9h4.7v5.8h-4.7zM102.8 102.9h4.7v5.8h-4.7zM154.3 102.9h9.0v5.8h-9.0zM184.3 102.9h4.7v5.8h-4.7zM184.3 108.3h4.7v5.8h-4.7zM29.8 130.0h4.7v5.8h-4.7zM42.7 130.0h4.7v5.8h-4.7zM51.3 130.0h9.0v5.8h-9.0zM158.6 130.0h9.0v5.8h-9.0zM171.5 130.0h13.3v5.8h-13.3zM218.7 130.0h4.7v5.8h-4.7zM253.0 130.0h4.7v5.8h-4.7zM265.9 130.0h9.0v5.8h-9.0zM304.5 130.0h4.7v5.8h-4.7zM85.6 135.4h4.7v5.8h-4.7zM180.1 135.4h4.7v5.8h-4.7zM253.0 135.4h9.0v5.8h-9.0zM278.8 135.4h4.7v5.8h-4.7zM295.9 135.4h4.7v5.8h-4.7zM17.0 140.8h4.7v5.8h-4.7zM85.6 140.8h4.7v5.8h-4.7zM162.9 140.8h4.7v5.8h-4.7zM253.0 140.8h4.7v5.8h-4.7zM270.2 140.8h4.7v5.8h-4.7zM-0.2 146.3h4.7v5.8h-4.7zM12.7 146.3h4.7v5.8h-4.7zM21.3 146.3h4.7v5.8h-4.7zM47.0 146.3h4.7v5.8h-4.7zM137.1 146.3h4.7v5.8h-4.7zM175.8 146.3h4.7v5.8h-4.7zM205.8 146.3h4.7v5.8h-4.7zM248.7 146.3h4.7v5.8h-4.7zM261.6 146.3h4.7v5.8h-4.7zM300.2 146.3h4.7v5.8h-4.7zM128.6 151.7h4.7v5.8h-4.7zM137.1 151.7h4.7v5.8h-4.7zM205.8 151.7h9.0v5.8h-9.0zM231.6 151.7h4.7v5.8h-4.7zM261.6 151.7h4.7v5.8h-4.7zM270.2 151.7h4.7v5.8h-4.7zM89.9 157.1h4.7v5.8h-4.7zM115.7 162.6h4.7v5.8h-4.7zM124.3 162.6h4.7v5.8h-4.7zM223.0 162.6h4.7v5.8h-4.7zM300.2 162.6h9.0v5.8h-9.0zM124.3 168.0h4.7v5.8h-4.7zM132.8 168.0h9.0v5.8h-9.0zM223.0 168.0h4.7v5.8h-4.7zM253.0 168.0h4.7v5.8h-4.7zM4.1 173.4h4.7v5.8h-4.7zM17.0 173.4h4.7v5.8h-4.7zM59.9 173.4h4.7v5.8h-4.7zM128.6 173.4h4.7v5.8h-4.7zM240.1 173.4h9.0v5.8h-9.0zM270.2 173.4h4.7v5.8h-4.7zM287.3 173.4h4.7v5.8h-4.7zM-0.2 178.8h4.7v5.8h-4.7zM21.3 178.8h4.7v5.8h-4.7zM59.9 178.8h9.0v5.8h-9.0zM81.3 178.8h4.7v5.8h-4.7zM98.5 178.8h4.7v5.8h-4.7zM107.1 178.8h4.7v5.8h-4.7zM124.3 178.8h9.0v5.8h-9.0zM184.3 178.8h4.7v5.8h-4.7zM192.9 178.8h4.7v5.8h-4.7zM253.0 178.8h17.6v5.8h-17.6zM283.1 178.8h9.0v5.8h-9.0zM21.3 184.2h4.7v5.8h-4.7zM47.0 184.2h9.0v5.8h-9.0zM94.2 184.2h9.0v5.8h-9.0zM107.1 184.2h4.7v5.8h-4.7zM145.7 184.2h4.7v5.8h-4.7zM175.8 184.2h4.7v5.8h-4.7zM188.6 184.2h4.7v5.8h-4.7zM231.6 184.2h9.0v5.8h-9.0zM270.2 184.2h4.7v5.8h-4.7zM248.7 189.7h4.7v5.8h-4.7zM257.3 189.7h9.0v5.8h-9.0zM270.2 189.7h9.0v5.8h-9.0zM295.9 189.7h9.0v5.8h-9.0zM128.6 195.1h9.0v5.8h-9.0zM240.1 195.1h4.7v5.8h-4.7zM98.5 200.5h4.7v5.8h-4.7zM184.3 200.5h4.7v5.8h-4.7zM287.3 200.5h4.7v5.8h-4.7zM98.5 206.0h4.7v5.8h-4.7zM115.7 206.0h4.7v5.8h-4.7zM240.1 206.0h9.0v5.8h-9.0zM270.2 206.0h4.7v5.8h-4.7zM8.4 211.4h17.6v5.8h-17.6zM38.4 211.4h4.7v5.8h-4.7zM55.6 211.4h4.7v5.8h-4.7zM81.3 211.4h4.7v5.8h-4.7zM102.8 211.4h4.7v5.8h-4.7zM111.4 211.4h4.7v5.8h-4.7zM162.9 211.4h4.7v5.8h-4.7zM180.1 211.4h4.7v5.8h-4.7zM192.9 211.4h4.7v5.8h-4.7zM201.5 211.4h4.7v5.8h-4.7zM214.4 211.4h9.0v5.8h-9.0zM240.1 211.4h9.0v5.8h-9.0zM274.5 211.4h9.0v5.8h-9.0zM300.2 211.4h9.0v5.8h-9.0z"/>
<path fill="#df2" d="M12.7 -0.2h4.7v5.8h-4.7zM34.1 -0.2h13.3v5.8h-13.3zM85.6 -0.2h4.7v5.8h-4.7zM98.5 -0.2h4.7v5.8h-4.7zM167.2 -0.2h9.0v5.8h-9.0zM214.4 -0.2h4.7v5.8h-4.7zM231.6 -0.2h9.0v5.8h-9.0zM248.7 -0.2h4.7v5.8h-4.7zM38.4 5.2h4.7v5.8h-4.7zM175.8 5.2h4.7v5.8h-4.7zM184.3 5.2h4.7v5.8h-4.7zM210.1 5.2h13.3v5.8h-13.3zM304.5 5.2h4.7v5.8h-4.7zM81.3 10.7h4.7v5.8h-4.7zM107.1 10.7h4.7v5.8h-4.7zM115.7 10.7h4.7v5.8h-4.7zM180.1 10.7h9.0v5.8h-9.0zM205.8 10.7h4.7v5.8h-4.7zM214.4 10.7h4.7v5.8h-4.7zM300.2 10.7h4.7v5.8h-4.7zM81.3 16.1h9.0v5.8h-9.0zM154.3 16.1h4.7v5.8h-4.7zM223.0 16.1h4.7v5.8h-4.7zM257.3 16.1h9.0v5.8h-9.0zM274.5 16.1h4.7v5.8h-4.7zM-0.2 21.5h4.7v5.8h-4.7zM29.8 21.5h4.7v5.8h-4.7zM38.4 21.5h9.0v5.8h-9.0zM72.8 21.5h4.7v5.8h-4.7zM115.7 21.5h4.7v5.8h-4.7zM124.3 21.5h4.7v5.8h-4.7zM150.0 21.5h4.7v5.8h-4.7zM192.9 21.5h4.7v5.8h-4.7zM205.8 21.5h4.7v5.8h-4.7zM223.0 21.5h4.7v5.8h-4.7zM257.3 21.5h4.7v5.8h-4.7zM265.9 21.5h4.7v5.8h-4.7zM304.5 21.5h4.7v5.8h-4.7zM25.6 26.9h4.7v5.8h-4.7zM85.6 26.9h4.7v5.8h-4.7zM124.3 26.9h4.7v5.8h-4.7zM180.1 26.9h4.7v5.8h-4.7zM253.0 26.9h4.7v5.8h-4.7zM270.2 26.9h4.7v5.8h-4.7zM4.1 32.3h4.7v5.8h-4.7zM25.6 32.3h4.7v5.8h-4.7zM34.1 32.3h4.7v5.8h-4.7zM64.2 32.3h4.7v5.8h-4.7zM124.3 32.3h4.7v5.8h-4.7zM184.3 32.3h13.3v5.8h-13.3zM270.2 32.3h4.7v5.8h-4.7zM-0.2 37.8h4.7v5.8h-4.7zM21.3 37.8h4.7v5.8h-4.7zM42.7 37.8h4.7v5.8h-4.7zM89.9 37.8h4.7v5.8h-4.7zM192.9 37.8h4.7v5.8h-4.7zM201.5 37.8h4.7v5.8h-4.7zM210.1 37.8h4.7v5.8h-4.7zM257.3 37.8h4.7v5.8h-4.7zM4.1 43.2h4.7v5.8h-4.7zM17.0 43.2h4.7v5.8h-4.7zM47.0 43.2h9.0v5.8h-9.0zM192.9 43.2h4.7v5.8h-4.7zM201.5 43.2h9.0v5.8h-9.0zM4.1 48.6h4.7v5.8h-4.7zM12.7 48.6h4.7v5.8h-4.7zM25.6 48.6h9.0v5.8h-9.0zM201.5 48.6h4.7v5.8h-4.7zM287.3 48.6h9.0v5.8h-9.0zM8.4 54.0h4.7v5.8h-4.7zM287.3 54.0h4.7v5.8h-4.7zM4.1 59.5h4.7v5.8h-4.7zM115.7 59.5h4.7v5.8h-4.7zM124.3 59.5h4.7v5.8h-4.7zM158.6 59.5h4.7v5.8h-4.7zM4.1 64.9h4.7v5.8h-4.7zM77.0 64.9h4.7v5.8h-4.7zM94.2 64.9h4.7v5.8h-4.7zM120.0 64.9h9.0v5.8h-9.0zM283.1 64.9h4.7v5.8h-4.7zM34.1 70.3h4.7v5.8h-4.7zM115.7 70.3h4.7v5.8h-4.7zM158.6 70.3h9.0v5.8h-9.0zM171.5 70.3h4.7v5.8h-4.7zM240.1 70.3h4.7v5.8h-4.7zM17.0 75.8h9.0v5.8h-9.0zM42.7 75.8h9.0v5.8h-9.0zM59.9 75.8h4.7v5.8h-4.7zM68.5 75.8h4.7v5.8h-4.7zM81.3 75.8h9.0v5.8h-9.0zM107.1 75.8h9.0v5.8h-9.0zM132.8 75.8h4.7v5.8h-4.7zM227.3 75.8h4.7v5.8h-4.7zM85.6 81.2h4.7v5.8h-4.7zM137.1 81.2h9.0v5.8h-9.0zM300.2 81.2h9.0v5.8h-9.0zM42.7 86.6h4.7v5.8h-4.7zM107.1 86.6h4.7v5.8h-4.7zM137.1 86.6h4.7v5.8h-4.7zM235.8 86.6h4.7v5.8h-4.7zM261.6 86.6h9.0v5.8h-9.0zM287.3 86.6h4.7v5.8h-4.7zM17.0 92.0h4.7v5.8h-4.7zM42.7 92.0h4.7v5.8h-4.7zM107.1 92.0h4.7v5.8h-4.7zM141.4 92.0h4.7v5.8h-4.7zM201.5 92.0h4.7v5.8h-4.7zM98.5 97.4h4.7v5.8h-4.7zM197.2 97.4h4.7v5.8h-4.7zM205.8 97.4h4.7v5.8h-4.7zM274.5 97.4h4.7v5.8h-4.7zM38.4 102.9h4.7v5.8h-4.7zM192.9 102.9h9.0v5.8h-9.0zM205.8 102.9h4.7v5.8h-4.7zM227.3 102.9h4.7v5.8h-4.7zM270.2 102.9h4.7v5.8h-4.7zM154.3 108.3h4.7v5.8h-4.7zM188.6 108.3h4.7v5.8h-4.7zM278.8 113.7h4.7v5.8h-4.7zM137.1 130.0h4.7v5.8h-4.7zM205.8 130.0h4.7v5.8h-4.7zM214.4 130.0h4.7v5.8h-4.7zM227.3 130.0h4.7v5.8h-4.7zM300.2 130.0h4.7v5.8h-4.7zM34.1 135.4h4.7v5.8h-4.7zM55.6 135.4h4.7v5.8h-4.7zM167.2 135.4h4.7v5.8h-4.7zM175.8 135.4h4.7v5.8h-4.7zM283.1 135.4h9.0v5.8h-9.0zM38.4 140.8h13.3v5.8h-13.3zM55.6 140.8h4.7v5.8h-4.7zM167.2 140.8h4.7v5.8h-4.7zM180.1 140.8h4.7v5.8h-4.7zM192.9 140.8h4.7v5.8h-4.7zM201.5 140.8h4.7v5.8h-4.7zM248.7 140.8h4.7v5.8h-4.7zM8.4 146.3h4.7v5.8h-4.7zM51.3 146.3h4.7v5.8h-4.7zM81.3 146.3h4.7v5.8h-4.7zM167.2 146.3h4.7v5.8h-4.7zM188.6 146.3h4.7v5.8h-4.7zM240.1 146.3h4.7v5.8h-4.7zM253.0 146.3h4.7v5.8h-4.7zM265.9 146.3h4.7v5.8h-4.7zM17.0 151.7h9.0v5.8h-9.0zM55.6 151.7h4.7v5.8h-4.7zM89.9 151.7h4.7v5.8h-4.7zM141.4 151.7h4.7v5.8h-4.7zM227.3 151.7h4.7v5.8h-4.7zM257.3 151.7h4.7v5.8h-4.7zM265.9 151.7h4.7v5.8h-4.7zM278.8 151.7h9.0v5.8h-9.0zM295.9 151.7h4.7v5.8h-4.7zM21.3 157.1h4.7v5.8h-4.7zM210.1 157.1h4.7v5.8h-4.7zM132.8 162.6h4.7v5.8h-4.7zM214.4 162.6h4.7v5.8h-4.7zM59.9 168.0h4.7v5.8h-4.7zM120.0 168.0h4.7v5.8h-4.7zM214.4 168.0h9.0v5.8h-9.0zM300.2 168.0h4.7v5.8h-4.7zM-0.2 173.4h4.7v5.8h-4.7zM8.4 173.4h9.0v5.8h-9.0zM21.3 173.4h4.7v5.8h-4.7zM124.3 173.4h4.7v5.8h-4.7zM265.9 173.4h4.7v5.8h-4.7zM291.6 173.4h13.3v5.8h-13.3zM47.0 178.8h4.7v5.8h-4.7zM180.1 178.8h4.7v5.8h-4.7zM270.2 178.8h4.7v5.8h-4.7zM291.6 178.8h9.0v5.8h-9.0zM29.8 184.2h4.7v5.8h-4.7zM38.4 184.2h9.0v5.8h-9.0zM55.6 184.2h4.7v5.8h-4.7zM72.8 184.2h4.7v5.8h-4.7zM300.2 184.2h4.7v5.8h-4.7zM244.4 189.7h4.7v5.8h-4.7zM244.4 195.1h4.7v5.8h-4.7zM265.9 195.1h9.0v5.8h-9.0zM132.8 200.5h4.7v5.8h-4.7zM244.4 200.5h9.0v5.8h-9.0zM107.1 206.0h4.7v5.8h-4.7zM124.3 206.0h4.7v5.8h-4.7zM265.9 206.0h4.7v5.8h-4.7zM120.0 211.4h4.7v5.8h-4.7zM248.7 211.4h9.0v5.8h-9.0zM261.6 211.4h4.7v5.8h-4.7z"/>
<path fill="#5fa" d="M21.3 -0.2h4.7v5.8h-4.7zM265.9 -0.2h4.7v5.8h-4.7zM175.8 16.1h4.7v5.8h-4.7zM244.4 16.1h4.7v5.8h-4.7zM244.4 21.5h4.7v5.8h-4.7zM12.7 26.9h4.7v5.8h-4.7zM34.1 26.9h4.7v5.8h-4.7zM171.5 26.9h4.7v5.8h-4.7zM214.4 32.3h4.7v5.8h-4.7zM38.4 37.8h4.7v5.8h-4.7zM304.5 37.8h4.7v5.8h-4.7zM210.1 48.6h4.7v5.8h-4.7zM257.3 48.6h4.7v5.8h-4.7zM274.5 48.6h4.7v5.8h-4.7zM77.0 54.0h4.7v5.8h-4.7zM102.8 54.0h4.7v5.8h-4.7zM132.8 54.0h4.7v5.8h-4.7zM29.8 59.5h4.7v5.8h-4.7zM55.6 59.5h4.7v5.8h-4.7zM120.0 59.5h4.7v5.8h-4.7zM132.8 59.5h4.7v5.8h-4.7zM150.0 59.5h4.7v5.8h-4.7zM59.9 64.9h4.7v5.8h-4.7zM8.4 70.3h4.7v5.8h-4.7zM85.6 70.3h4.7v5.8h-4.7zM102.8 75.8h4.7v5.8h-4.7zM137.1 75.8h4.7v5.8h-4.7zM201.5 75.8h4.7v5.8h-4.7zM240.1 81.2h4.7v5.8h-4.7zM55.6 86.6h4.7v5.8h-4.7zM38.4 92.0h4.7v5.8h-4.7zM64.2 92.0h4.7v5.8h-4.7zM244.4 92.0h4.7v5.8h-4.7zM291.6 92.0h4.7v5.8h-4.7zM291.6 97.4h4.7v5.8h-4.7zM188.6 102.9h4.7v5.8h-4.7zM257.3 130.0h4.7v5.8h-4.7zM81.3 135.4h4.7v5.8h-4.7zM85.6 146.3h4.7v5.8h-4.7zM38.4 162.6h4.7v5.8h-4.7zM47.0 162.6h4.7v5.8h-4.7zM42.7 168.0h4.7v5.8h-4.7zM38.4 173.4h4.7v5.8h-4.7zM141.4 173.4h4.7v5.8h-4.7zM137.1 178.8h4.7v5.8h-4.7zM141.4 184.2h4.7v5.8h-4.7zM89.9 211.4h9.0v5.8h-9.0z"/>
<path fill="#cf3" d="M55.6 -0.2h13.3v5.8h-13.3zM102.8 -0.2h4.7v5.8h-4.7zM150.0 -0.2h4.7v5.8h-4.7zM223.0 -0.2h9.0v5.8h-9.0zM257.3 -0.2h4.7v5.8h-4.7zM25.6 5.2h4.7v5.8h-4.7zM42.7 5.2h4.7v5.8h-4.7zM81.3 5.2h4.7v5.8h-4.7zM98.5 5.2h9.0v5.8h-9.0zM171.5 5.2h4.7v5.8h-4.7zM223.0 5.2h9.0v5.8h-9.0zM248.7 5.2h4.7v5.8h-4.7zM261.6 5.2h4.7v5.8h-4.7zM175.8 10.7h4.7v5.8h-4.7zM210.1 10.7h4.7v5.8h-4.7zM218.7 10.7h9.0v5.8h-9.0zM248.7 10.7h4.7v5.8h-4.7zM265.9 10.7h4.7v5.8h-4.7zM304.5 10.7h4.7v5.8h-4.7zM-0.2 16.1h4.7v5.8h-4.7zM17.0 16.1h9.0v5.8h-9.0zM34.1 16.1h4.7v5.8h-4.7zM111.4 16.1h4.7v5.8h-4.7zM158.6 16.1h4.7v5.8h-4.7zM171.5 16.1h4.7v5.8h-4.7zM180.1 16.1h9.0v5.8h-9.0zM227.3 16.1h4.7v5.8h-4.7zM253.0 16.1h4.7v5.8h-4.7zM265.9 16.1h4.7v5.8h-4.7zM25.6 21.5h4.7v5.8h-4.7zM47.0 21.5h4.7v5.8h-4.7zM77.0 21.5h13.3v5.8h-13.3zM227.3 21.5h4.7v5.8h-4.7zM47.0 26.9h4.7v5.8h-4.7zM120.0 26.9h4.7v5.8h-4.7zM150.0 26.9h4.7v5.8h-4.7zM188.6 26.9h4.7v5.8h-4.7zM210.1 26.9h4.7v5.8h-4.7zM227.3 26.9h4.7v5.8h-4.7zM287.3 26.9h4.7v5.8h-4.7zM8.4 32.3h9.0v5.8h-9.0zM29.8 32.3h4.7v5.8h-4.7zM38.4 32.3h4.7v5.8h-4.7zM253.0 32.3h9.0v5.8h-9.0zM300.2 32.3h4.7v5.8h-4.7zM17.0 37.8h4.7v5.8h-4.7zM25.6 37.8h13.3v5.8h-13.3zM51.3 37.8h4.7v5.8h-4.7zM85.6 37.8h4.7v5.8h-4.7zM94.2 37.8h4.7v5.8h-4.7zM124.3 37.8h4.7v5.8h-4.7zM261.6 37.8h4.7v5.8h-4.7zM25.6 43.2h9.0v5.8h-9.0zM98.5 43.2h4.7v5.8h-4.7zM240.1 43.2h4.7v5.8h-4.7zM278.8 43.2h13.3v5.8h-13.3zM8.4 48.6h4.7v5.8h-4.7zM55.6 48.6h4.7v5.8h-4.7zM223.0 48.6h4.7v5.8h-4.7zM283.1 48.6h4.7v5.8h-4.7zM29.8 54.0h4.7v5.8h-4.7zM124.3 54.0h4.7v5.8h-4.7zM111.4 59.5h4.7v5.8h-4.7zM128.6 59.5h4.7v5.8h-4.7zM235.8 59.5h4.7v5.8h-4.7zM72.8 64.9h4.7v5.8h-4.7zM115.7 64.9h4.7v5.8h-4.7zM158.6 64.9h4.7v5.8h-4.7zM81.3 70.3h4.7v5.8h-4.7zM111.4 70.3h4.7v5.8h-4.7zM120.0 70.3h4.7v5.8h-4.7zM227.3 70.3h4.7v5.8h-4.7zM287.3 70.3h4.7v5.8h-4.7zM12.7 75.8h4.7v5.8h-4.7zM64.2 75.8h4.7v5.8h-4.7zM72.8 75.8h4.7v5.8h-4.7zM89.9 75.8h4.7v5.8h-4.7zM128.6 75.8h4.7v5.8h-4.7zM231.6 75.8h9.0v5.8h-9.0zM12.7 81.2h13.3v5.8h-13.3zM89.9 81.2h4.7v5.8h-4.7zM154.3 81.2h4.7v5.8h-4.7zM235.8 81.2h4.7v5.8h-4.7zM261.6 81.2h4.7v5.8h-4.7zM85.6 86.6h4.7v5.8h-4.7zM94.2 86.6h4.7v5.8h-4.7zM141.4 86.6h4.7v5.8h-4.7zM154.3 86.6h4.7v5.8h-4.7zM270.2 86.6h4.7v5.8h-4.7zM154.3 92.0h9.0v5.8h-9.0zM265.9 92.0h4.7v5.8h-4.7zM274.5 92.0h4.7v5.8h-4.7zM167.2 108.3h4.7v5.8h-4.7zM270.2 113.7h4.7v5.8h-4.7zM287.3 119.1h4.7v5.8h-4.7zM201.5 130.0h4.7v5.8h-4.7zM244.4 130.0h4.7v5.8h-4.7zM21.3 135.4h13.3v5.8h-13.3zM223.0 135.4h4.7v5.8h-4.7zM248.7 135.4h4.7v5.8h-4.7zM21.3 140.8h4.7v5.8h-4.7zM51.3 140.8h4.7v5.8h-4.7zM171.5 140.8h4.7v5.8h-4.7zM197.2 140.8h4.7v5.8h-4.7zM287.3 140.8h4.7v5.8h-4.7zM132.8 146.3h4.7v5.8h-4.7zM171.5 146.3h4.7v5.8h-4.7zM184.3 146.3h4.7v5.8h-4.7zM210.1 146.3h4.7v5.8h-4.7zM257.3 146.3h4.7v5.8h-4.7zM270.2 146.3h4.7v5.8h-4.7zM287.3 146.3h4.7v5.8h-4.7zM4.1 151.7h4.7v5.8h-4.7zM25.6 151.7h4.7v5.8h-4.7zM51.3 151.7h4.7v5.8h-4.7zM77.0 151.7h4.7v5.8h-4.7zM85.6 151.7h4.7v5.8h-4.7zM132.8 151.7h4.7v5.8h-4.7zM274.5 151.7h4.7v5.8h-4.7zM-0.2 157.1h4.7v5.8h-4.7zM25.6 157.1h4.7v5.8h-4.7zM77.0 157.1h4.7v5.8h-4.7zM132.8 157.1h4.7v5.8h-4.7zM141.4 157.1h4.7v5.8h-4.7zM162.9 157.1h4.7v5.8h-4.7zM25.6 162.6h4.7v5.8h-4.7zM137.1 162.6h9.0v5.8h-9.0zM210.1 162.6h4.7v5.8h-4.7zM55.6 168.0h4.7v5.8h-4.7zM115.7 168.0h4.7v5.8h-4.7zM304.5 168.0h4.7v5.8h-4.7zM68.5 173.4h4.7v5.8h-4.7zM72.8 178.8h4.7v5.8h-4.7zM132.8 178.8h4.7v5.8h-4.7zM244.4 178.8h4.7v5.8h-4.7zM300.2 178.8h4.7v5.8h-4.7zM248.7 184.2h4.7v5.8h-4.7zM81.3 189.7h4.7v5.8h-4.7zM184.3 189.7h4.7v5.8h-4.7zM304.5 189.7h4.7v5.8h-4.7zM184.3 195.1h4.7v5.8h-4.7zM261.6 195.1h4.7v5.8h-4.7zM25.6 200.5h4.7v5.8h-4.7zM253.0 200.5h4.7v5.8h-4.7zM265.9 200.5h9.0v5.8h-9.0zM47.0 206.0h4.7v5.8h-4.7zM257.3 211.4h4.7v5.8h-4.7z"/>
<path fill="#bf4" d="M68.5 -0.2h17.6v5.8h-17.6zM158.6 -0.2h4.7v5.8h-4.7zM8.4 5.2h4.7v5.8h-4.7zM21.3 5.2h4.7v5.8h-4.7zM29.8 5.2h4.7v5.8h-4.7zM150.0 5.2h4.7v5.8h-4.7zM4.1 10.7h4.7v5.8h-4.7zM25.6 10.7h4.7v5.8h-4.7zM38.4 10.7h4.7v5.8h-4.7zM72.8 10.7h4.7v5.8h-4.7zM150.0 10.7h4.7v5.8h-4.7zM171.5 10.7h4.7v5.8h-4.7zM25.6 16.1h9.0v5.8h-9.0zM38.4 16.1h4.7v5.8h-4.7zM64.2 16.1h4.7v5.8h-4.7zM77.0 16.1h4.7v5.8h-4.7zM89.9 16.1h9.0v5.8h-9.0zM107.1 16.1h4.7v5.8h-4.7zM162.9 16.1h4.7v5.8h-4.7zM304.5 16.1h4.7v5.8h-4.7zM55.6 21.5h4.7v5.8h-4.7zM111.4 21.5h4.7v5.8h-4.7zM180.1 21.5h13.3v5.8h-13.3zM253.0 21.5h4.7v5.8h-4.7zM29.8 26.9h4.7v5.8h-4.7zM51.3 26.9h13.3v5.8h-13.3zM89.9 26.9h4.7v5.8h-4.7zM115.7 26.9h4.7v5.8h-4.7zM184.3 26.9h4.7v5.8h-4.7zM205.8 26.9h4.7v5.8h-4.7zM-0.2 32.3h4.7v5.8h-4.7zM89.9 32.3h4.7v5.8h-4.7zM115.7 32.3h4.7v5.8h-4.7zM12.7 37.8h4.7v5.8h-4.7zM102.8 37.8h4.7v5.8h-4.7zM244.4 37.8h4.7v5.8h-4.7zM12.7 43.2h4.7v5.8h-4.7zM102.8 43.2h4.7v5.8h-4.7zM107.1 59.5h4.7v5.8h-4.7zM162.9 59.5h4.7v5.8h-4.7zM287.3 59.5h4.7v5.8h-4.7zM64.2 64.9h9.0v5.8h-9.0zM111.4 64.9h4.7v5.8h-4.7zM128.6 64.9h4.7v5.8h-4.7zM137.1 64.9h4.7v5.8h-4.7zM201.5 64.9h4.7v5.8h-4.7zM235.8 64.9h4.7v5.8h-4.7zM59.9 70.3h4.7v5.8h-4.7zM68.5 70.3h13.3v5.8h-13.3zM231.6 70.3h9.0v5.8h-9.0zM295.9 75.8h4.7v5.8h-4.7zM42.7 81.2h4.7v5.8h-4.7zM51.3 81.2h4.7v5.8h-4.7zM102.8 81.2h4.7v5.8h-4.7zM89.9 86.6h4.7v5.8h-4.7zM102.8 86.6h4.7v5.8h-4.7zM102.8 92.0h4.7v5.8h-4.7zM34.1 119.1h4.7v5.8h-4.7zM167.2 119.1h4.7v5.8h-4.7zM223.0 119.1h9.0v5.8h-9.0zM180.1 124.6h4.7v5.8h-4.7zM223.0 124.6h4.7v5.8h-4.7zM47.0 130.0h4.7v5.8h-4.7zM184.3 130.0h4.7v5.8h-4.7zM231.6 130.0h13.3v5.8h-13.3zM51.3 135.4h4.7v5.8h-4.7zM171.5 135.4h4.7v5.8h-4.7zM205.8 135.4h9.0v5.8h-9.0zM218.7 135.4h4.7v5.8h-4.7zM227.3 135.4h4.7v5.8h-4.7zM25.6 140.8h4.7v5.8h-4.7zM205.8 140.8h9.0v5.8h-9.0zM244.4 140.8h4.7v5.8h-4.7zM274.5 140.8h4.7v5.8h-4.7zM25.6 146.3h4.7v5.8h-4.7zM55.6 146.3h4.7v5.8h-4.7zM214.4 146.3h4.7v5.8h-4.7zM235.8 146.3h4.7v5.8h-4.7zM12.7 151.7h4.7v5.8h-4.7zM81.3 151.7h4.7v5.8h-4.7zM85.6 157.1h4.7v5.8h-4.7zM-0.2 162.6h4.7v5.8h-4.7zM21.3 162.6h4.7v5.8h-4.7zM77.0 162.6h4.7v5.8h-4.7zM85.6 162.6h4.7v5.8h-4.7zM-0.2 168.0h4.7v5.8h-4.7zM17.0 168.0h4.7v5.8h-4.7zM85.6 168.0h4.7v5.8h-4.7zM25.6 173.4h4.7v5.8h-4.7zM51.3 173.4h4.7v5.8h-4.7zM304.5 173.4h4.7v5.8h-4.7zM25.6 178.8h9.0v5.8h-9.0zM42.7 178.8h4.7v5.8h-4.7zM55.6 178.8h4.7v5.8h-4.7zM68.5 178.8h4.7v5.8h-4.7zM77.0 178.8h4.7v5.8h-4.7zM304.5 178.8h4.7v5.8h-4.7zM244.4 184.2h4.7v5.8h-4.7zM304.5 184.2h4.7v5.8h-4.7zM128.6 189.7h4.7v5.8h-4.7zM287.3 195.1h4.7v5.8h-4.7zM-0.2 200.5h4.7v5.8h-4.7zM124.3 200.5h4.7v5.8h-4.7zM175.8 200.5h4.7v5.8h-4.7zM261.6 206.0h4.7v5.8h-4.7z"/>
<path fill="#1fe" d="M154.3 -0.2h4.7v5.8h-4.7zM51.3 5.2h4.7v5.8h-4.7zM4.1 21.5h4.7v5.8h-4.7zM107.1 26.9h4.7v5.8h-4.7zM261.6 26.9h4.7v5.8h-4.7zM102.8 32.3h4.7v5.8h-4.7zM210.1 32.3h4.7v5.8h-4.7zM227.3 32.3h4.7v5.8h-4.7zM291.6 37.8h4.7v5.8h-4.7zM171.5 54.0h4.7v5.8h-4.7zM175.8 70.3h4.7v5.8h-4.7zM145.7 86.6h4.7v5.8h-4.7zM253.0 92.0h4.7v5.8h-4.7zM291.6 130.0h4.7v5.8h-4.7zM188.6 140.8h4.7v5.8h-4.7zM81.3 173.4h4.7v5.8h-4.7zM253.0 195.1h9.0v5.8h-9.0zM115.7 211.4h4.7v5.8h-4.7z"/>
<path fill="#af5" d="M162.9 -0.2h4.7v5.8h-4.7zM244.4 -0.2h4.7v5.8h-4.7zM12.7 5.2h4.7v5.8h-4.7zM34.1 5.2h4.7v5.8h-4.7zM47.0 5.2h4.7v5.8h-4.7zM72.8 5.2h4.7v5.8h-4.7zM231.6 5.2h4.7v5.8h-4.7zM244.4 5.2h4.7v5.8h-4.7zM98.5 10.7h4.7v5.8h-4.7zM154.3 10.7h9.0v5.8h-9.0zM227.3 10.7h9.0v5.8h-9.0zM4.1 16.1h4.7v5.8h-4.7zM42.7 16.1h4.7v5.8h-4.7zM51.3 21.5h4.7v5.8h-4.7zM94.2 26.9h4.7v5.8h-4.7zM51.3 32.3h4.7v5.8h-4.7zM94.2 32.3h9.0v5.8h-9.0zM283.1 32.3h4.7v5.8h-4.7zM4.1 37.8h9.0v5.8h-9.0zM98.5 37.8h4.7v5.8h-4.7zM235.8 43.2h4.7v5.8h-4.7zM291.6 54.0h4.7v5.8h-4.7zM145.7 59.5h4.7v5.8h-4.7zM291.6 59.5h4.7v5.8h-4.7zM162.9 64.9h4.7v5.8h-4.7zM227.3 64.9h4.7v5.8h-4.7zM107.1 70.3h4.7v5.8h-4.7zM128.6 70.3h9.0v5.8h-9.0zM167.2 70.3h4.7v5.8h-4.7zM291.6 70.3h9.0v5.8h-9.0zM300.2 75.8h9.0v5.8h-9.0zM94.2 81.2h4.7v5.8h-4.7zM180.1 81.2h4.7v5.8h-4.7zM287.3 81.2h4.7v5.8h-4.7zM4.1 92.0h4.7v5.8h-4.7zM55.6 92.0h4.7v5.8h-4.7zM270.2 92.0h4.7v5.8h-4.7zM270.2 97.4h4.7v5.8h-4.7zM248.7 108.3h4.7v5.8h-4.7zM300.2 108.3h4.7v5.8h-4.7zM180.1 113.7h4.7v5.8h-4.7zM240.1 119.1h4.7v5.8h-4.7zM188.6 130.0h4.7v5.8h-4.7zM197.2 130.0h4.7v5.8h-4.7zM47.0 135.4h4.7v5.8h-4.7zM201.5 135.4h4.7v5.8h-4.7zM240.1 135.4h9.0v5.8h-9.0zM29.8 140.8h4.7v5.8h-4.7zM240.1 140.8h4.7v5.8h-4.7zM283.1 140.8h4.7v5.8h-4.7zM223.0 146.3h13.3v5.8h-13.3zM8.4 151.7h4.7v5.8h-4.7zM47.0 151.7h4.7v5.8h-4.7zM4.1 157.1h4.7v5.8h-4.7zM17.0 157.1h4.7v5.8h-4.7zM29.8 157.1h4.7v5.8h-4.7zM55.6 157.1h4.7v5.8h-4.7zM4.1 162.6h4.7v5.8h-4.7zM55.6 162.6h4.7v5.8h-4.7zM4.1 168.0h4.7v5.8h-4.7zM12.7 168.0h4.7v5.8h-4.7zM21.3 168.0h9.0v5.8h-9.0zM51.3 168.0h4.7v5.8h-4.7zM77.0 168.0h4.7v5.8h-4.7zM47.0 173.4h4.7v5.8h-4.7zM55.6 173.4h4.7v5.8h-4.7zM77.0 173.4h4.7v5.8h-4.7zM34.1 189.7h4.7v5.8h-4.7zM115.7 195.1h4.7v5.8h-4.7zM141.4 195.1h4.7v5.8h-4.7zM141.4 200.5h4.7v5.8h-4.7zM162.9 200.5h4.7v5.8h-4.7zM261.6 200.5h4.7v5.8h-4.7zM29.8 206.0h4.7v5.8h-4.7zM89.9 206.0h9.0v5.8h-9.0zM210.1 206.0h4.7v5.8h-4.7zM248.7 206.0h4.7v5.8h-4.7zM158.6 211.4h4.7v5.8h-4.7z"/>
<path fill="#8f7" d="M180.1 -0.2h4.7v5.8h-4.7zM55.6 5.2h9.0v5.8h-9.0zM180.1 5.2h4.7v5.8h-4.7zM235.8 5.2h9.0v5.8h-9.0zM42.7 10.7h4.7v5.8h-4.7zM51.3 10.7h4.7v5.8h-4.7zM102.8 10.7h4.7v5.8h-4.7zM8.4 16.1h9.0v5.8h-9.0zM51.3 16.1h4.7v5.8h-4.7zM98.5 16.1h9.0v5.8h-9.0zM107.1 21.5h4.7v5.8h-4.7zM201.5 21.5h4.7v5.8h-4.7zM231.6 21.5h4.7v5.8h-4.7zM231.6 26.9h4.7v5.8h-4.7zM158.6 32.3h4.7v5.8h-4.7zM59.9 37.8h4.7v5.8h-4.7zM235.8 37.8h4.7v5.8h-4.7zM25.6 59.5h4.7v5.8h-4.7zM300.2 59.5h4.7v5.8h-4.7zM42.7 64.9h4.7v5.8h-4.7zM304.5 64.9h4.7v5.8h-4.7zM304.5 70.3h4.7v5.8h-4.7zM8.4 81.2h4.7v5.8h-4.7zM145.7 81.2h4.7v5.8h-4.7zM72.8 86.6h4.7v5.8h-4.7zM231.6 97.4h4.7v5.8h-4.7zM244.4 97.4h4.7v5.8h-4.7zM167.2 102.9h4.7v5.8h-4.7zM12.7 108.3h4.7v5.8h-4.7zM278.8 108.3h4.7v5.8h-4.7zM34.1 113.7h4.7v5.8h-4.7zM188.6 119.1h4.7v5.8h-4.7zM205.8 119.1h4.7v5.8h-4.7zM205.8 124.6h4.7v5.8h-4.7zM291.6 124.6h4.7v5.8h-4.7zM188.6 135.4h9.0v5.8h-9.0zM81.3 140.8h4.7v5.8h-4.7zM214.4 140.8h4.7v5.8h-4.7zM223.0 140.8h4.7v5.8h-4.7zM274.5 146.3h4.7v5.8h-4.7zM34.1 151.7h4.7v5.8h-4.7zM244.4 151.7h4.7v5.8h-4.7zM8.4 157.1h4.7v5.8h-4.7zM47.0 157.1h9.0v5.8h-9.0zM81.3 157.1h4.7v5.8h-4.7zM235.8 157.1h4.7v5.8h-4.7zM17.0 162.6h4.7v5.8h-4.7zM51.3 162.6h4.7v5.8h-4.7zM81.3 162.6h4.7v5.8h-4.7zM231.6 162.6h4.7v5.8h-4.7zM29.8 168.0h4.7v5.8h-4.7zM47.0 168.0h4.7v5.8h-4.7zM29.8 173.4h4.7v5.8h-4.7zM42.7 173.4h4.7v5.8h-4.7zM227.3 173.4h4.7v5.8h-4.7zM137.1 184.2h4.7v5.8h-4.7zM115.7 189.7h4.7v5.8h-4.7zM25.6 195.1h4.7v5.8h-4.7zM29.8 200.5h4.7v5.8h-4.7zM171.5 206.0h4.7v5.8h-4.7zM47.0 211.4h4.7v5.8h-4.7z"/>
<path fill="#9f6" d="M240.1 -0.2h4.7v5.8h-4.7zM287.3 -0.2h4.7v5.8h-4.7zM77.0 5.2h4.7v5.8h-4.7zM158.6 5.2h4.7v5.8h-4.7zM167.2 5.2h4.7v5.8h-4.7zM8.4 10.7h4.7v5.8h-4.7zM34.1 10.7h4.7v5.8h-4.7zM77.0 10.7h4.7v5.8h-4.7zM167.2 10.7h4.7v5.8h-4.7zM47.0 16.1h4.7v5.8h-4.7zM55.6 16.1h4.7v5.8h-4.7zM231.6 16.1h4.7v5.8h-4.7zM248.7 16.1h4.7v5.8h-4.7zM89.9 21.5h4.7v5.8h-4.7zM98.5 21.5h9.0v5.8h-9.0zM248.7 21.5h4.7v5.8h-4.7zM98.5 26.9h9.0v5.8h-9.0zM300.2 26.9h4.7v5.8h-4.7zM55.6 32.3h9.0v5.8h-9.0zM240.1 37.8h4.7v5.8h-4.7zM283.1 37.8h9.0v5.8h-9.0zM8.4 43.2h4.7v5.8h-4.7zM55.6 43.2h4.7v5.8h-4.7zM235.8 48.6h4.7v5.8h-4.7zM42.7 59.5h4.7v5.8h-4.7zM201.5 59.5h4.7v5.8h-4.7zM25.6 64.9h4.7v5.8h-4.7zM107.1 64.9h4.7v5.8h-4.7zM132.8 64.9h4.7v5.8h-4.7zM98.5 70.3h4.7v5.8h-4.7zM300.2 70.3h4.7v5.8h-4.7zM98.5 75.8h4.7v5.8h-4.7zM180.1 75.8h4.7v5.8h-4.7zM47.0 81.2h4.7v5.8h-4.7zM98.5 81.2h4.7v5.8h-4.7zM29.8 108.3h4.7v5.8h-4.7zM167.2 113.7h4.7v5.8h-4.7zM261.6 113.7h4.7v5.8h-4.7zM291.6 119.1h4.7v5.8h-4.7zM188.6 124.6h4.7v5.8h-4.7zM192.9 130.0h4.7v5.8h-4.7zM8.4 135.4h4.7v5.8h-4.7zM197.2 135.4h4.7v5.8h-4.7zM231.6 135.4h4.7v5.8h-4.7zM8.4 140.8h4.7v5.8h-4.7zM218.7 140.8h4.7v5.8h-4.7zM227.3 140.8h4.7v5.8h-4.7zM235.8 140.8h4.7v5.8h-4.7zM278.8 140.8h4.7v5.8h-4.7zM29.8 146.3h4.7v5.8h-4.7zM38.4 146.3h4.7v5.8h-4.7zM218.7 146.3h4.7v5.8h-4.7zM283.1 146.3h4.7v5.8h-4.7zM12.7 157.1h4.7v5.8h-4.7zM8.4 168.0h4.7v5.8h-4.7zM81.3 168.0h4.7v5.8h-4.7zM89.9 168.0h4.7v5.8h-4.7zM235.8 173.4h4.7v5.8h-4.7zM34.1 178.8h4.7v5.8h-4.7zM59.9 195.1h4.7v5.8h-4.7zM291.6 195.1h4.7v5.8h-4.7zM257.3 200.5h4.7v5.8h-4.7zM253.0 206.0h9.0v5.8h-9.0z"/>
<path fill="#fa0" d="M270.2 -0.2h9.0v5.8h-9.0zM278.8 5.2h4.7v5.8h-4.7zM145.7 43.2h9.0v5.8h-9.0zM85.6 48.6h4.7v5.8h-4.7zM253.0 48.6h4.7v5.8h-4.7zM89.9 54.0h4.7v5.8h-4.7zM253.0 54.0h4.7v5.8h-4.7zM188.6 59.5h4.7v5.8h-4.7zM283.1 81.2h4.7v5.8h-4.7zM171.5 86.6h4.7v5.8h-4.7zM-0.2 92.0h4.7v5.8h-4.7zM-0.2 97.4h9.0v5.8h-9.0zM124.3 97.4h4.7v5.8h-4.7zM85.6 102.9h4.7v5.8h-4.7zM68.5 108.3h4.7v5.8h-4.7zM283.1 108.3h4.7v5.8h-4.7zM295.9 108.3h4.7v5.8h-4.7zM-0.2 113.7h4.7v5.8h-4.7zM64.2 113.7h4.7v5.8h-4.7zM102.8 113.7h4.7v5.8h-4.7zM158.6 113.7h4.7v5.8h-4.7zM175.8 113.7h4.7v5.8h-4.7zM304.5 113.7h4.7v5.8h-4.7zM154.3 119.1h4.7v5.8h-4.7zM171.5 119.1h4.7v5.8h-4.7zM231.6 119.1h4.7v5.8h-4.7zM257.3 119.1h9.0v5.8h-9.0zM283.1 119.1h4.7v5.8h-4.7zM295.9 119.1h13.3v5.8h-13.3zM17.0 124.6h4.7v5.8h-4.7zM274.5 124.6h4.7v5.8h-4.7zM4.1 130.0h4.7v5.8h-4.7zM77.0 135.4h4.7v5.8h-4.7zM141.4 135.4h4.7v5.8h-4.7zM102.8 151.7h4.7v5.8h-4.7zM158.6 151.7h4.7v5.8h-4.7zM167.2 157.1h4.7v5.8h-4.7zM244.4 157.1h4.7v5.8h-4.7zM72.8 162.6h4.7v5.8h-4.7zM274.5 162.6h4.7v5.8h-4.7zM287.3 162.6h4.7v5.8h-4.7zM158.6 168.0h4.7v5.8h-4.7zM175.8 173.4h4.7v5.8h-4.7zM192.9 173.4h4.7v5.8h-4.7zM214.4 173.4h4.7v5.8h-4.7zM158.6 184.2h4.7v5.8h-4.7zM4.1 189.7h4.7v5.8h-4.7zM12.7 189.7h4.7v5.8h-4.7zM21.3 189.7h4.7v5.8h-4.7zM29.8 189.7h4.7v5.8h-4.7zM42.7 189.7h4.7v5.8h-4.7zM55.6 189.7h9.0v5.8h-9.0zM98.5 189.7h4.7v5.8h-4.7zM158.6 189.7h4.7v5.8h-4.7zM188.6 189.7h4.7v5.8h-4.7zM201.5 189.7h9.0v5.8h-9.0zM-0.2 195.1h4.7v5.8h-4.7zM34.1 195.1h4.7v5.8h-4.7zM72.8 195.1h4.7v5.8h-4.7zM81.3 195.1h4.7v5.8h-4.7zM150.0 195.1h4.7v5.8h-4.7zM283.1 195.1h4.7v5.8h-4.7zM34.1 200.5h4.7v5.8h-4.7zM158.6 200.5h4.7v5.8h-4.7zM167.2 200.5h4.7v5.8h-4.7zM231.6 200.5h4.7v5.8h-4.7zM8.4 206.0h4.7v5.8h-4.7zM72.8 206.0h4.7v5.8h-4.7zM158.6 206.0h4.7v5.8h-4.7zM184.3 206.0h4.7v5.8h-4.7zM192.9 206.0h13.3v5.8h-13.3zM231.6 206.0h9.0v5.8h-9.0z"/>
<path fill="#fb0" d="M278.8 -0.2h4.7v5.8h-4.7zM150.0 37.8h4.7v5.8h-4.7zM300.2 37.8h4.7v5.8h-4.7zM89.9 48.6h4.7v5.8h-4.7zM150.0 48.6h4.7v5.8h-4.7zM218.7 48.6h4.7v5.8h-4.7zM248.7 48.6h4.7v5.8h-4.7zM47.0 54.0h4.7v5.8h-4.7zM94.2 54.0h4.7v5.8h-4.7zM145.7 54.0h4.7v5.8h-4.7zM51.3 59.5h4.7v5.8h-4.7zM248.7 59.5h9.0v5.8h-9.0zM184.3 64.9h4.7v5.8h-4.7zM192.9 64.9h4.7v5.8h-4.7zM278.8 81.2h4.7v5.8h-4.7zM8.4 86.6h4.7v5.8h-4.7zM291.6 86.6h4.7v5.8h-4.7zM8.4 92.0h4.7v5.8h-4.7zM94.2 97.4h4.7v5.8h-4.7zM115.7 97.4h9.0v5.8h-9.0zM128.6 97.4h13.3v5.8h-13.3zM4.1 102.9h4.7v5.8h-4.7zM4.1 108.3h9.0v5.8h-9.0zM107.1 108.3h4.7v5.8h-4.7zM240.1 108.3h9.0v5.8h-9.0zM274.5 108.3h4.7v5.8h-4.7zM287.3 108.3h9.0v5.8h-9.0zM17.0 113.7h9.0v5.8h-9.0zM29.8 113.7h4.7v5.8h-4.7zM38.4 113.7h4.7v5.8h-4.7zM201.5 113.7h39.0v5.8h-39.0zM38.4 119.1h4.7v5.8h-4.7zM55.6 119.1h4.7v5.8h-4.7zM64.2 119.1h4.7v5.8h-4.7zM184.3 119.1h4.7v5.8h-4.7zM192.9 119.1h4.7v5.8h-4.7zM201.5 119.1h4.7v5.8h-4.7zM210.1 119.1h9.0v5.8h-9.0zM235.8 119.1h4.7v5.8h-4.7zM175.8 124.6h4.7v5.8h-4.7zM253.0 124.6h4.7v5.8h-4.7zM270.2 124.6h4.7v5.8h-4.7zM278.8 124.6h4.7v5.8h-4.7zM-0.2 130.0h4.7v5.8h-4.7zM12.7 130.0h4.7v5.8h-4.7zM77.0 140.8h4.7v5.8h-4.7zM94.2 140.8h4.7v5.8h-4.7zM158.6 146.3h4.7v5.8h-4.7zM201.5 151.7h4.7v5.8h-4.7zM98.5 157.1h4.7v5.8h-4.7zM145.7 157.1h4.7v5.8h-4.7zM240.1 157.1h4.7v5.8h-4.7zM278.8 157.1h9.0v5.8h-9.0zM98.5 162.6h4.7v5.8h-4.7zM240.1 162.6h9.0v5.8h-9.0zM235.8 168.0h4.7v5.8h-4.7zM98.5 173.4h4.7v5.8h-4.7zM107.1 173.4h4.7v5.8h-4.7zM150.0 173.4h4.7v5.8h-4.7zM154.3 178.8h4.7v5.8h-4.7zM218.7 178.8h4.7v5.8h-4.7zM227.3 184.2h4.7v5.8h-4.7zM-0.2 189.7h4.7v5.8h-4.7zM150.0 189.7h4.7v5.8h-4.7zM197.2 189.7h4.7v5.8h-4.7zM283.1 189.7h4.7v5.8h-4.7zM4.1 195.1h4.7v5.8h-4.7zM197.2 195.1h4.7v5.8h-4.7zM205.8 195.1h13.3v5.8h-13.3zM12.7 200.5h4.7v5.8h-4.7zM137.1 200.5h4.7v5.8h-4.7zM278.8 200.5h4.7v5.8h-4.7zM291.6 200.5h4.7v5.8h-4.7zM-0.2 206.0h9.0v5.8h-9.0zM205.8 206.0h4.7v5.8h-4.7zM227.3 206.0h4.7v5.8h-4.7zM283.1 206.0h13.3v5.8h-13.3z"/>
<path fill="#fd0" d="M283.1 -0.2h4.7v5.8h-4.7zM111.4 5.2h4.7v5.8h-4.7zM287.3 5.2h4.7v5.8h-4.7zM89.9 10.7h4.7v5.8h-4.7zM132.8 21.5h4.7v5.8h-4.7zM214.4 21.5h4.7v5.8h-4.7zM141.4 26.9h4.7v5.8h-4.7zM162.9 26.9h4.7v5.8h-4.7zM295.9 26.9h4.7v5.8h-4.7zM77.0 32.3h4.7v5.8h-4.7zM141.4 32.3h4.7v5.8h-4.7zM304.5 32.3h4.7v5.8h-4.7zM68.5 43.2h4.7v5.8h-4.7zM137.1 43.2h4.7v5.8h-4.7zM218.7 43.2h4.7v5.8h-4.7zM248.7 43.2h4.7v5.8h-4.7zM295.9 43.2h4.7v5.8h-4.7zM304.5 43.2h4.7v5.8h-4.7zM-0.2 48.6h4.7v5.8h-4.7zM68.5 48.6h4.7v5.8h-4.7zM81.3 48.6h4.7v5.8h-4.7zM137.1 48.6h4.7v5.8h-4.7zM265.9 48.6h4.7v5.8h-4.7zM300.2 48.6h9.0v5.8h-9.0zM21.3 54.0h4.7v5.8h-4.7zM51.3 54.0h4.7v5.8h-4.7zM81.3 54.0h9.0v5.8h-9.0zM98.5 54.0h4.7v5.8h-4.7zM180.1 54.0h9.0v5.8h-9.0zM218.7 54.0h4.7v5.8h-4.7zM265.9 54.0h9.0v5.8h-9.0zM17.0 59.5h9.0v5.8h-9.0zM85.6 59.5h9.0v5.8h-9.0zM180.1 59.5h4.7v5.8h-4.7zM197.2 59.5h4.7v5.8h-4.7zM244.4 59.5h4.7v5.8h-4.7zM265.9 59.5h4.7v5.8h-4.7zM29.8 64.9h9.0v5.8h-9.0zM51.3 64.9h4.7v5.8h-4.7zM180.1 64.9h4.7v5.8h-4.7zM197.2 64.9h4.7v5.8h-4.7zM223.0 64.9h4.7v5.8h-4.7zM184.3 70.3h4.7v5.8h-4.7zM192.9 70.3h4.7v5.8h-4.7zM201.5 70.3h4.7v5.8h-4.7zM223.0 70.3h4.7v5.8h-4.7zM274.5 70.3h9.0v5.8h-9.0zM188.6 75.8h13.3v5.8h-13.3zM274.5 75.8h9.0v5.8h-9.0zM4.1 81.2h4.7v5.8h-4.7zM115.7 81.2h4.7v5.8h-4.7zM167.2 81.2h4.7v5.8h-4.7zM188.6 81.2h9.0v5.8h-9.0zM214.4 81.2h4.7v5.8h-4.7zM244.4 81.2h9.0v5.8h-9.0zM295.9 81.2h4.7v5.8h-4.7zM115.7 86.6h4.7v5.8h-4.7zM167.2 86.6h4.7v5.8h-4.7zM184.3 86.6h4.7v5.8h-4.7zM214.4 86.6h4.7v5.8h-4.7zM68.5 92.0h9.0v5.8h-9.0zM81.3 92.0h4.7v5.8h-4.7zM175.8 92.0h4.7v5.8h-4.7zM188.6 92.0h4.7v5.8h-4.7zM287.3 92.0h4.7v5.8h-4.7zM295.9 92.0h4.7v5.8h-4.7zM51.3 97.4h4.7v5.8h-4.7zM68.5 97.4h9.0v5.8h-9.0zM111.4 97.4h4.7v5.8h-4.7zM171.5 97.4h13.3v5.8h-13.3zM248.7 97.4h4.7v5.8h-4.7zM261.6 97.4h4.7v5.8h-4.7zM283.1 97.4h9.0v5.8h-9.0zM51.3 102.9h4.7v5.8h-4.7zM98.5 102.9h4.7v5.8h-4.7zM107.1 102.9h4.7v5.8h-4.7zM175.8 102.9h4.7v5.8h-4.7zM244.4 102.9h4.7v5.8h-4.7zM291.6 102.9h4.7v5.8h-4.7zM304.5 102.9h4.7v5.8h-4.7zM21.3 108.3h4.7v5.8h-4.7zM34.1 108.3h9.0v5.8h-9.0zM55.6 108.3h9.0v5.8h-9.0zM158.6 108.3h4.7v5.8h-4.7zM180.1 108.3h4.7v5.8h-4.7zM235.8 108.3h4.7v5.8h-4.7zM253.0 108.3h9.0v5.8h-9.0zM304.5 108.3h4.7v5.8h-4.7zM42.7 113.7h4.7v5.8h-4.7zM188.6 113.7h4.7v5.8h-4.7zM25.6 124.6h4.7v5.8h-4.7zM38.4 124.6h4.7v5.8h-4.7zM55.6 124.6h4.7v5.8h-4.7zM107.1 124.6h4.7v5.8h-4.7zM167.2 124.6h4.7v5.8h-4.7zM192.9 124.6h9.0v5.8h-9.0zM210.1 124.6h4.7v5.8h-4.7zM244.4 124.6h4.7v5.8h-4.7zM257.3 124.6h9.0v5.8h-9.0zM287.3 124.6h4.7v5.8h-4.7zM300.2 124.6h4.7v5.8h-4.7zM17.0 130.0h4.7v5.8h-4.7zM85.6 130.0h4.7v5.8h-4.7zM128.6 130.0h9.0v5.8h-9.0zM-0.2 135.4h9.0v5.8h-9.0zM124.3 135.4h4.7v5.8h-4.7zM158.6 135.4h4.7v5.8h-4.7zM265.9 135.4h4.7v5.8h-4.7zM89.9 140.8h4.7v5.8h-4.7zM124.3 140.8h9.0v5.8h-9.0zM141.4 140.8h4.7v5.8h-4.7zM94.2 146.3h4.7v5.8h-4.7zM180.1 146.3h4.7v5.8h-4.7zM192.9 146.3h4.7v5.8h-4.7zM98.5 151.7h4.7v5.8h-4.7zM167.2 151.7h4.7v5.8h-4.7zM240.1 151.7h4.7v5.8h-4.7zM300.2 151.7h4.7v5.8h-4.7zM59.9 157.1h4.7v5.8h-4.7zM72.8 157.1h4.7v5.8h-4.7zM214.4 157.1h9.0v5.8h-9.0zM227.3 157.1h4.7v5.8h-4.7zM248.7 157.1h9.0v5.8h-9.0zM270.2 157.1h4.7v5.8h-4.7zM295.9 157.1h9.0v5.8h-9.0zM94.2 162.6h4.7v5.8h-4.7zM111.4 162.6h4.7v5.8h-4.7zM205.8 162.6h4.7v5.8h-4.7zM248.7 162.6h17.6v5.8h-17.6zM64.2 168.0h4.7v5.8h-4.7zM94.2 168.0h9.0v5.8h-9.0zM210.1 168.0h4.7v5.8h-4.7zM231.6 168.0h4.7v5.8h-4.7zM240.1 168.0h9.0v5.8h-9.0zM94.2 173.4h4.7v5.8h-4.7zM274.5 173.4h4.7v5.8h-4.7zM111.4 178.8h9.0v5.8h-9.0zM175.8 178.8h4.7v5.8h-4.7zM223.0 178.8h4.7v5.8h-4.7zM8.4 184.2h4.7v5.8h-4.7zM111.4 184.2h13.3v5.8h-13.3zM197.2 184.2h9.0v5.8h-9.0zM278.8 184.2h4.7v5.8h-4.7zM235.8 189.7h4.7v5.8h-4.7zM278.8 189.7h4.7v5.8h-4.7zM291.6 189.7h4.7v5.8h-4.7zM150.0 200.5h4.7v5.8h-4.7zM192.9 200.5h4.7v5.8h-4.7zM201.5 200.5h4.7v5.8h-4.7zM218.7 200.5h4.7v5.8h-4.7zM240.1 200.5h4.7v5.8h-4.7zM304.5 200.5h4.7v5.8h-4.7zM145.7 206.0h4.7v5.8h-4.7zM154.3 206.0h4.7v5.8h-4.7zM214.4 206.0h9.0v5.8h-9.0zM278.8 206.0h4.7v5.8h-4.7zM64.2 211.4h9.0v5.8h-9.0zM132.8 211.4h4.7v5.8h-4.7zM197.2 211.4h4.7v5.8h-4.7zM283.1 211.4h4.7v5.8h-4.7z"/>
<path fill="#0ef" d="M4.1 5.2h4.7v5.8h-4.7zM64.2 5.2h9.0v5.8h-9.0zM81.3 26.9h4.7v5.8h-4.7zM244.4 32.3h4.7v5.8h-4.7zM227.3 43.2h4.7v5.8h-4.7zM235.8 54.0h4.7v5.8h-4.7zM59.9 130.0h4.7v5.8h-4.7zM231.6 140.8h4.7v5.8h-4.7zM29.8 162.6h4.7v5.8h-4.7z"/>
<path fill="#0ff" d="M17.0 5.2h4.7v5.8h-4.7zM12.7 21.5h4.7v5.8h-4.7zM111.4 26.9h4.7v5.8h-4.7zM47.0 32.3h4.7v5.8h-4.7zM107.1 37.8h4.7v5.8h-4.7zM21.3 43.2h4.7v5.8h-4.7zM167.2 59.5h4.7v5.8h-4.7zM102.8 64.9h4.7v5.8h-4.7zM167.2 64.9h4.7v5.8h-4.7zM94.2 70.3h4.7v5.8h-4.7zM137.1 70.3h4.7v5.8h-4.7zM210.1 130.0h4.7v5.8h-4.7zM295.9 130.0h4.7v5.8h-4.7zM34.1 157.1h4.7v5.8h-4.7zM77.0 184.2h4.7v5.8h-4.7zM240.1 184.2h4.7v5.8h-4.7zM295.9 184.2h4.7v5.8h-4.7zM175.8 211.4h4.7v5.8h-4.7z"/>
<path fill="#6f9" d="M120.0 5.2h4.7v5.8h-4.7zM59.9 10.7h4.7v5.8h-4.7zM192.9 10.7h4.7v5.8h-4.7zM201.5 10.7h4.7v5.8h-4.7zM240.1 10.7h4.7v5.8h-4.7zM235.8 16.1h4.7v5.8h-4.7zM235.8 21.5h4.7v5.8h-4.7zM278.8 21.5h4.7v5.8h-4.7zM218.7 26.9h4.7v5.8h-4.7zM235.8 26.9h4.7v5.8h-4.7zM145.7 32.3h4.7v5.8h-4.7zM248.7 32.3h4.7v5.8h-4.7zM72.8 37.8h4.7v5.8h-4.7zM231.6 43.2h4.7v5.8h-4.7zM227.3 48.6h9.0v5.8h-9.0zM192.9 54.0h4.7v5.8h-4.7zM231.6 54.0h4.7v5.8h-4.7zM59.9 59.5h4.7v5.8h-4.7zM81.3 59.5h4.7v5.8h-4.7zM223.0 59.5h4.7v5.8h-4.7zM231.6 59.5h4.7v5.8h-4.7zM300.2 64.9h4.7v5.8h-4.7zM210.1 75.8h4.7v5.8h-4.7zM171.5 81.2h4.7v5.8h-4.7zM184.3 81.2h4.7v5.8h-4.7zM201.5 81.2h4.7v5.8h-4.7zM4.1 86.6h4.7v5.8h-4.7zM12.7 92.0h4.7v5.8h-4.7zM218.7 92.0h4.7v5.8h-4.7zM248.7 92.0h4.7v5.8h-4.7zM167.2 97.4h4.7v5.8h-4.7zM253.0 97.4h4.7v5.8h-4.7zM55.6 102.9h4.7v5.8h-4.7zM300.2 102.9h4.7v5.8h-4.7zM300.2 135.4h4.7v5.8h-4.7zM184.3 140.8h4.7v5.8h-4.7zM115.7 157.1h4.7v5.8h-4.7zM231.6 157.1h4.7v5.8h-4.7zM8.4 162.6h9.0v5.8h-9.0zM34.1 168.0h4.7v5.8h-4.7zM128.6 168.0h4.7v5.8h-4.7zM227.3 168.0h4.7v5.8h-4.7zM34.1 173.4h4.7v5.8h-4.7zM102.8 184.2h4.7v5.8h-4.7zM192.9 189.7h4.7v5.8h-4.7zM274.5 200.5h4.7v5.8h-4.7zM223.0 211.4h4.7v5.8h-4.7z"/>
<path fill="#2fd" d="M128.6 5.2h4.7v5.8h-4.7zM154.3 5.2h4.7v5.8h-4.7zM188.6 10.7h4.7v5.8h-4.7zM150.0 16.1h4.7v5.8h-4.7zM59.9 21.5h4.7v5.8h-4.7zM128.6 21.5h4.7v5.8h-4.7zM167.2 21.5h4.7v5.8h-4.7zM175.8 21.5h4.7v5.8h-4.7zM261.6 21.5h4.7v5.8h-4.7zM132.8 26.9h4.7v5.8h-4.7zM145.7 26.9h4.7v5.8h-4.7zM248.7 26.9h4.7v5.8h-4.7zM111.4 32.3h4.7v5.8h-4.7zM162.9 32.3h4.7v5.8h-4.7zM287.3 32.3h4.7v5.8h-4.7zM59.9 43.2h9.0v5.8h-9.0zM72.8 48.6h4.7v5.8h-4.7zM304.5 54.0h4.7v5.8h-4.7zM295.9 59.5h4.7v5.8h-4.7zM98.5 64.9h4.7v5.8h-4.7zM154.3 64.9h4.7v5.8h-4.7zM287.3 64.9h4.7v5.8h-4.7zM295.9 64.9h4.7v5.8h-4.7zM12.7 70.3h4.7v5.8h-4.7zM38.4 70.3h4.7v5.8h-4.7zM102.8 70.3h4.7v5.8h-4.7zM8.4 75.8h4.7v5.8h-4.7zM94.2 75.8h4.7v5.8h-4.7zM12.7 86.6h4.7v5.8h-4.7zM21.3 86.6h4.7v5.8h-4.7zM51.3 86.6h4.7v5.8h-4.7zM192.9 86.6h4.7v5.8h-4.7zM248.7 86.6h4.7v5.8h-4.7zM227.3 92.0h4.7v5.8h-4.7zM227.3 97.4h4.7v5.8h-4.7zM21.3 130.0h4.7v5.8h-4.7zM261.6 130.0h4.7v5.8h-4.7zM184.3 135.4h4.7v5.8h-4.7zM34.1 140.8h4.7v5.8h-4.7zM162.9 146.3h4.7v5.8h-4.7zM-0.2 151.7h4.7v5.8h-4.7zM248.7 173.4h4.7v5.8h-4.7zM51.3 178.8h4.7v5.8h-4.7zM141.4 178.8h4.7v5.8h-4.7zM34.1 184.2h4.7v5.8h-4.7z"/>
<path fill="#7f8" d="M162.9 5.2h4.7v5.8h-4.7zM274.5 5.2h4.7v5.8h-4.7zM12.7 10.7h4.7v5.8h-4.7zM47.0 10.7h4.7v5.8h-4.7zM55.6 10.7h4.7v5.8h-4.7zM120.0 10.7h4.7v5.8h-4.7zM162.9 10.7h4.7v5.8h-4.7zM197.2 10.7h4.7v5.8h-4.7zM235.8 10.7h4.7v5.8h-4.7zM244.4 10.7h4.7v5.8h-4.7zM201.5 16.1h4.7v5.8h-4.7zM158.6 26.9h4.7v5.8h-4.7zM167.2 26.9h4.7v5.8h-4.7zM231.6 32.3h9.0v5.8h-9.0zM55.6 37.8h4.7v5.8h-4.7zM137.1 37.8h4.7v5.8h-4.7zM223.0 37.8h4.7v5.8h-4.7zM231.6 37.8h4.7v5.8h-4.7zM197.2 48.6h4.7v5.8h-4.7zM72.8 54.0h4.7v5.8h-4.7zM205.8 54.0h4.7v5.8h-4.7zM81.3 64.9h4.7v5.8h-4.7zM77.0 75.8h4.7v5.8h-4.7zM145.7 75.8h4.7v5.8h-4.7zM150.0 102.9h4.7v5.8h-4.7zM248.7 102.9h9.0v5.8h-9.0zM261.6 102.9h4.7v5.8h-4.7zM261.6 108.3h4.7v5.8h-4.7zM192.9 113.7h4.7v5.8h-4.7zM248.7 113.7h4.7v5.8h-4.7zM257.3 113.7h4.7v5.8h-4.7zM197.2 119.1h4.7v5.8h-4.7zM21.3 124.6h4.7v5.8h-4.7zM235.8 135.4h4.7v5.8h-4.7zM300.2 140.8h4.7v5.8h-4.7zM278.8 146.3h4.7v5.8h-4.7zM120.0 151.7h4.7v5.8h-4.7zM38.4 157.1h9.0v5.8h-9.0zM34.1 162.6h4.7v5.8h-4.7zM89.9 162.6h4.7v5.8h-4.7zM210.1 200.5h4.7v5.8h-4.7zM295.9 200.5h4.7v5.8h-4.7zM223.0 206.0h4.7v5.8h-4.7zM171.5 211.4h4.7v5.8h-4.7z"/>
<path fill="#3fc" d="M188.6 5.2h4.7v5.8h-4.7zM29.8 10.7h4.7v5.8h-4.7zM64.2 10.7h9.0v5.8h-9.0zM261.6 10.7h4.7v5.8h-4.7zM167.2 16.1h4.7v5.8h-4.7zM188.6 16.1h4.7v5.8h-4.7zM278.8 16.1h4.7v5.8h-4.7zM171.5 21.5h4.7v5.8h-4.7zM218.7 21.5h4.7v5.8h-4.7zM240.1 21.5h4.7v5.8h-4.7zM-0.2 26.9h4.7v5.8h-4.7zM8.4 26.9h4.7v5.8h-4.7zM214.4 26.9h4.7v5.8h-4.7zM107.1 32.3h4.7v5.8h-4.7zM132.8 32.3h4.7v5.8h-4.7zM278.8 32.3h4.7v5.8h-4.7zM47.0 37.8h4.7v5.8h-4.7zM162.9 37.8h4.7v5.8h-4.7zM197.2 43.2h4.7v5.8h-4.7zM223.0 43.2h4.7v5.8h-4.7zM59.9 48.6h4.7v5.8h-4.7zM77.0 48.6h4.7v5.8h-4.7zM192.9 48.6h4.7v5.8h-4.7zM205.8 48.6h4.7v5.8h-4.7zM120.0 54.0h4.7v5.8h-4.7zM223.0 54.0h4.7v5.8h-4.7zM98.5 59.5h9.0v5.8h-9.0zM171.5 59.5h4.7v5.8h-4.7zM227.3 59.5h4.7v5.8h-4.7zM304.5 59.5h4.7v5.8h-4.7zM8.4 64.9h4.7v5.8h-4.7zM38.4 64.9h4.7v5.8h-4.7zM51.3 70.3h4.7v5.8h-4.7zM154.3 70.3h4.7v5.8h-4.7zM210.1 70.3h4.7v5.8h-4.7zM51.3 75.8h4.7v5.8h-4.7zM240.1 75.8h4.7v5.8h-4.7zM38.4 81.2h4.7v5.8h-4.7zM150.0 86.6h4.7v5.8h-4.7zM218.7 86.6h4.7v5.8h-4.7zM244.4 86.6h4.7v5.8h-4.7zM47.0 92.0h4.7v5.8h-4.7zM162.9 97.4h4.7v5.8h-4.7zM218.7 124.6h4.7v5.8h-4.7zM25.6 130.0h4.7v5.8h-4.7zM175.8 140.8h4.7v5.8h-4.7zM34.1 146.3h4.7v5.8h-4.7zM42.7 146.3h4.7v5.8h-4.7zM244.4 146.3h4.7v5.8h-4.7zM29.8 151.7h4.7v5.8h-4.7zM42.7 151.7h4.7v5.8h-4.7zM137.1 157.1h4.7v5.8h-4.7zM128.6 162.6h4.7v5.8h-4.7zM72.8 173.4h4.7v5.8h-4.7zM85.6 178.8h4.7v5.8h-4.7zM94.2 178.8h4.7v5.8h-4.7zM120.0 178.8h4.7v5.8h-4.7zM17.0 184.2h4.7v5.8h-4.7zM64.2 184.2h4.7v5.8h-4.7zM81.3 184.2h9.0v5.8h-9.0zM295.9 195.1h4.7v5.8h-4.7zM29.8 211.4h4.7v5.8h-4.7zM42.7 211.4h4.7v5.8h-4.7z"/>
<path fill="#4fb" d="M197.2 5.2h4.7v5.8h-4.7zM128.6 10.7h4.7v5.8h-4.7zM274.5 10.7h4.7v5.8h-4.7zM240.1 16.1h4.7v5.8h-4.7zM34.1 21.5h4.7v5.8h-4.7zM4.1 26.9h4.7v5.8h-4.7zM137.1 32.3h4.7v5.8h-4.7zM201.5 32.3h4.7v5.8h-4.7zM223.0 32.3h4.7v5.8h-4.7zM261.6 32.3h4.7v5.8h-4.7zM274.5 32.3h4.7v5.8h-4.7zM274.5 37.8h9.0v5.8h-9.0zM291.6 43.2h4.7v5.8h-4.7zM55.6 64.9h4.7v5.8h-4.7zM171.5 64.9h4.7v5.8h-4.7zM175.8 75.8h4.7v5.8h-4.7zM120.0 81.2h4.7v5.8h-4.7zM38.4 86.6h4.7v5.8h-4.7zM64.2 86.6h4.7v5.8h-4.7zM158.6 86.6h4.7v5.8h-4.7zM85.6 92.0h4.7v5.8h-4.7zM278.8 97.4h4.7v5.8h-4.7zM304.5 97.4h4.7v5.8h-4.7zM171.5 102.9h4.7v5.8h-4.7zM274.5 102.9h9.0v5.8h-9.0zM192.9 108.3h4.7v5.8h-4.7zM231.6 108.3h4.7v5.8h-4.7zM261.6 135.4h4.7v5.8h-4.7zM162.9 151.7h4.7v5.8h-4.7zM291.6 151.7h4.7v5.8h-4.7zM42.7 162.6h4.7v5.8h-4.7zM38.4 168.0h4.7v5.8h-4.7zM287.3 168.0h4.7v5.8h-4.7zM89.9 173.4h4.7v5.8h-4.7zM102.8 178.8h4.7v5.8h-4.7zM248.7 178.8h4.7v5.8h-4.7zM274.5 195.1h4.7v5.8h-4.7zM34.1 211.4h4.7v5.8h-4.7z"/>
<path fill="#fc0" d="M270.2 5.2h4.7v5.8h-4.7zM283.1 5.2h4.7v5.8h-4.7zM295.9 32.3h4.7v5.8h-4.7zM77.0 37.8h4.7v5.8h-4.7zM145.7 37.8h4.7v5.8h-4.7zM295.9 37.8h4.7v5.8h-4.7zM77.0 43.2h4.7v5.8h-4.7zM141.4 43.2h4.7v5.8h-4.7zM253.0 43.2h4.7v5.8h-4.7zM300.2 43.2h4.7v5.8h-4.7zM94.2 48.6h4.7v5.8h-4.7zM141.4 48.6h4.7v5.8h-4.7zM188.6 48.6h4.7v5.8h-4.7zM244.4 48.6h4.7v5.8h-4.7zM42.7 54.0h4.7v5.8h-4.7zM68.5 54.0h4.7v5.8h-4.7zM141.4 54.0h4.7v5.8h-4.7zM188.6 54.0h4.7v5.8h-4.7zM244.4 54.0h4.7v5.8h-4.7zM184.3 59.5h4.7v5.8h-4.7zM192.9 59.5h4.7v5.8h-4.7zM188.6 64.9h4.7v5.8h-4.7zM214.4 75.8h4.7v5.8h-4.7zM283.1 75.8h4.7v5.8h-4.7zM175.8 81.2h4.7v5.8h-4.7zM197.2 81.2h4.7v5.8h-4.7zM274.5 81.2h4.7v5.8h-4.7zM291.6 81.2h4.7v5.8h-4.7zM-0.2 86.6h4.7v5.8h-4.7zM175.8 86.6h4.7v5.8h-4.7zM278.8 86.6h4.7v5.8h-4.7zM295.9 86.6h4.7v5.8h-4.7zM171.5 92.0h4.7v5.8h-4.7zM283.1 92.0h4.7v5.8h-4.7zM85.6 97.4h4.7v5.8h-4.7zM-0.2 102.9h4.7v5.8h-4.7zM287.3 102.9h4.7v5.8h-4.7zM-0.2 108.3h4.7v5.8h-4.7zM25.6 108.3h4.7v5.8h-4.7zM64.2 108.3h4.7v5.8h-4.7zM171.5 108.3h9.0v5.8h-9.0zM265.9 108.3h9.0v5.8h-9.0zM47.0 113.7h17.6v5.8h-17.6zM154.3 113.7h4.7v5.8h-4.7zM162.9 113.7h4.7v5.8h-4.7zM184.3 113.7h4.7v5.8h-4.7zM197.2 113.7h4.7v5.8h-4.7zM42.7 119.1h4.7v5.8h-4.7zM51.3 119.1h4.7v5.8h-4.7zM59.9 119.1h4.7v5.8h-4.7zM158.6 119.1h9.0v5.8h-9.0zM218.7 119.1h4.7v5.8h-4.7zM29.8 124.6h9.0v5.8h-9.0zM64.2 124.6h4.7v5.8h-4.7zM171.5 124.6h4.7v5.8h-4.7zM201.5 124.6h4.7v5.8h-4.7zM227.3 124.6h4.7v5.8h-4.7zM248.7 124.6h4.7v5.8h-4.7zM283.1 124.6h4.7v5.8h-4.7zM8.4 130.0h4.7v5.8h-4.7zM278.8 130.0h4.7v5.8h-4.7zM12.7 135.4h4.7v5.8h-4.7zM158.6 140.8h4.7v5.8h-4.7zM120.0 146.3h4.7v5.8h-4.7zM59.9 151.7h4.7v5.8h-4.7zM94.2 157.1h4.7v5.8h-4.7zM274.5 157.1h4.7v5.8h-4.7zM287.3 157.1h9.0v5.8h-9.0zM145.7 162.6h4.7v5.8h-4.7zM162.9 162.6h4.7v5.8h-4.7zM270.2 162.6h4.7v5.8h-4.7zM291.6 162.6h4.7v5.8h-4.7zM68.5 168.0h4.7v5.8h-4.7zM274.5 168.0h13.3v5.8h-13.3zM89.9 178.8h4.7v5.8h-4.7zM197.2 178.8h4.7v5.8h-4.7zM4.1 184.2h4.7v5.8h-4.7zM8.4 189.7h4.7v5.8h-4.7zM38.4 189.7h4.7v5.8h-4.7zM72.8 189.7h9.0v5.8h-9.0zM145.7 189.7h4.7v5.8h-4.7zM154.3 189.7h4.7v5.8h-4.7zM287.3 189.7h4.7v5.8h-4.7zM8.4 195.1h4.7v5.8h-4.7zM145.7 195.1h4.7v5.8h-4.7zM154.3 195.1h4.7v5.8h-4.7zM192.9 195.1h4.7v5.8h-4.7zM201.5 195.1h4.7v5.8h-4.7zM278.8 195.1h4.7v5.8h-4.7zM4.1 200.5h9.0v5.8h-9.0zM197.2 200.5h4.7v5.8h-4.7zM205.8 200.5h4.7v5.8h-4.7zM214.4 200.5h4.7v5.8h-4.7zM34.1 206.0h13.3v5.8h-13.3zM137.1 206.0h9.0v5.8h-9.0z"/>
<path fill="#0af" d="M17.0 10.7h4.7v5.8h-4.7z"/>
<path fill="#0cf" d="M21.3 10.7h4.7v5.8h-4.7zM227.3 37.8h4.7v5.8h-4.7z"/>
<path fill="#0df" d="M59.9 16.1h4.7v5.8h-4.7zM8.4 21.5h4.7v5.8h-4.7zM94.2 21.5h4.7v5.8h-4.7zM227.3 54.0h4.7v5.8h-4.7zM64.2 70.3h4.7v5.8h-4.7zM124.3 70.3h4.7v5.8h-4.7zM47.0 86.6h4.7v5.8h-4.7zM214.4 135.4h4.7v5.8h-4.7zM38.4 178.8h4.7v5.8h-4.7zM240.1 178.8h4.7v5.8h-4.7z"/>
<path fill="#09f" d="M240.1 26.9h9.0v5.8h-9.0zM240.1 32.3h4.7v5.8h-4.7z"/>
<path fill="#f90" d="M145.7 48.6h4.7v5.8h-4.7zM248.7 54.0h4.7v5.8h-4.7zM47.0 59.5h4.7v5.8h-4.7zM283.1 86.6h4.7v5.8h-4.7zM77.0 97.4h9.0v5.8h-9.0zM89.9 97.4h4.7v5.8h-4.7zM72.8 102.9h4.7v5.8h-4.7zM141.4 102.9h4.7v5.8h-4.7zM98.5 108.3h4.7v5.8h-4.7zM111.4 108.3h4.7v5.8h-4.7zM150.0 108.3h4.7v5.8h-4.7zM25.6 113.7h4.7v5.8h-4.7zM171.5 113.7h4.7v5.8h-4.7zM244.4 113.7h4.7v5.8h-4.7zM253.0 113.7h4.7v5.8h-4.7zM283.1 113.7h4.7v5.8h-4.7zM295.9 113.7h4.7v5.8h-4.7zM-0.2 119.1h4.7v5.8h-4.7zM21.3 119.1h4.7v5.8h-4.7zM29.8 119.1h4.7v5.8h-4.7zM175.8 119.1h9.0v5.8h-9.0zM244.4 119.1h13.3v5.8h-13.3zM278.8 119.1h4.7v5.8h-4.7zM-0.2 124.6h4.7v5.8h-4.7zM154.3 124.6h4.7v5.8h-4.7zM64.2 130.0h4.7v5.8h-4.7zM107.1 130.0h4.7v5.8h-4.7zM124.3 130.0h4.7v5.8h-4.7zM89.9 135.4h4.7v5.8h-4.7zM115.7 151.7h4.7v5.8h-4.7zM145.7 151.7h4.7v5.8h-4.7zM102.8 157.1h4.7v5.8h-4.7zM111.4 157.1h4.7v5.8h-4.7zM167.2 162.6h4.7v5.8h-4.7zM235.8 162.6h4.7v5.8h-4.7zM278.8 162.6h4.7v5.8h-4.7zM102.8 168.0h9.0v5.8h-9.0zM102.8 173.4h4.7v5.8h-4.7zM171.5 184.2h4.7v5.8h-4.7zM17.0 189.7h4.7v5.8h-4.7zM25.6 189.7h4.7v5.8h-4.7zM68.5 189.7h4.7v5.8h-4.7zM85.6 189.7h9.0v5.8h-9.0zM102.8 189.7h9.0v5.8h-9.0zM137.1 189.7h9.0v5.8h-9.0zM210.1 189.7h4.7v5.8h-4.7zM12.7 195.1h4.7v5.8h-4.7zM68.5 195.1h4.7v5.8h-4.7zM77.0 195.1h4.7v5.8h-4.7zM85.6 195.1h4.7v5.8h-4.7zM158.6 195.1h4.7v5.8h-4.7zM167.2 195.1h4.7v5.8h-4.7zM188.6 195.1h4.7v5.8h-4.7zM38.4 200.5h9.0v5.8h-9.0zM81.3 200.5h4.7v5.8h-4.7zM188.6 200.5h4.7v5.8h-4.7zM283.1 200.5h4.7v5.8h-4.7zM12.7 206.0h4.7v5.8h-4.7zM25.6 206.0h4.7v5.8h-4.7zM77.0 206.0h9.0v5.8h-9.0zM111.4 206.0h4.7v5.8h-4.7zM120.0 206.0h4.7v5.8h-4.7zM175.8 206.0h9.0v5.8h-9.0zM188.6 206.0h4.7v5.8h-4.7z"/>
<path fill="#0bf" d="M231.6 64.9h4.7v5.8h-4.7zM291.6 64.9h4.7v5.8h-4.7zM98.5 86.6h4.7v5.8h-4.7zM38.4 151.7h4.7v5.8h-4.7z"/>
<path fill="#f50" d="M77.0 102.9h9.0v5.8h-9.0zM132.8 102.9h4.7v5.8h-4.7zM98.5 135.4h4.7v5.8h-4.7zM115.7 135.4h4.7v5.8h-4.7zM68.5 146.3h9.0v5.8h-9.0zM107.1 146.3h4.7v5.8h-4.7zM68.5 151.7h4.7v5.8h-4.7zM150.0 151.7h9.0v5.8h-9.0zM197.2 151.7h4.7v5.8h-4.7zM154.3 157.1h4.7v5.8h-4.7zM150.0 162.6h9.0v5.8h-9.0zM154.3 168.0h4.7v5.8h-4.7zM188.6 168.0h4.7v5.8h-4.7zM158.6 173.4h4.7v5.8h-4.7zM167.2 178.8h4.7v5.8h-4.7zM94.2 195.1h9.0v5.8h-9.0zM227.3 195.1h9.0v5.8h-9.0zM89.9 200.5h4.7v5.8h-4.7z"/>
<path fill="#f80" d="M89.9 102.9h4.7v5.8h-4.7zM72.8 108.3h4.7v5.8h-4.7zM4.1 113.7h13.3v5.8h-13.3zM240.1 113.7h4.7v5.8h-4.7zM265.9 113.7h4.7v5.8h-4.7zM274.5 113.7h4.7v5.8h-4.7zM291.6 113.7h4.7v5.8h-4.7zM300.2 113.7h4.7v5.8h-4.7zM17.0 119.1h4.7v5.8h-4.7zM25.6 119.1h4.7v5.8h-4.7zM102.8 119.1h4.7v5.8h-4.7zM274.5 119.1h4.7v5.8h-4.7zM4.1 124.6h4.7v5.8h-4.7zM120.0 140.8h4.7v5.8h-4.7zM145.7 140.8h4.7v5.8h-4.7zM158.6 157.1h4.7v5.8h-4.7zM64.2 162.6h4.7v5.8h-4.7zM102.8 162.6h4.7v5.8h-4.7zM158.6 162.6h4.7v5.8h-4.7zM283.1 162.6h4.7v5.8h-4.7zM150.0 168.0h4.7v5.8h-4.7zM205.8 184.2h4.7v5.8h-4.7zM51.3 189.7h4.7v5.8h-4.7zM64.2 189.7h4.7v5.8h-4.7zM94.2 189.7h4.7v5.8h-4.7zM120.0 189.7h4.7v5.8h-4.7zM231.6 189.7h4.7v5.8h-4.7zM29.8 195.1h4.7v5.8h-4.7zM38.4 195.1h4.7v5.8h-4.7zM51.3 195.1h9.0v5.8h-9.0zM137.1 195.1h4.7v5.8h-4.7zM171.5 195.1h4.7v5.8h-4.7zM218.7 195.1h9.0v5.8h-9.0zM17.0 200.5h4.7v5.8h-4.7zM51.3 200.5h4.7v5.8h-4.7zM171.5 200.5h4.7v5.8h-4.7zM51.3 206.0h4.7v5.8h-4.7zM68.5 206.0h4.7v5.8h-4.7zM102.8 206.0h4.7v5.8h-4.7zM162.9 206.0h9.0v5.8h-9.0z"/>
<path fill="#f60" d="M94.2 102.9h4.7v5.8h-4.7zM111.4 102.9h21.9v5.8h-21.9zM137.1 102.9h4.7v5.8h-4.7zM145.7 108.3h4.7v5.8h-4.7zM8.4 119.1h4.7v5.8h-4.7zM137.1 124.6h4.7v5.8h-4.7zM77.0 130.0h4.7v5.8h-4.7zM115.7 130.0h4.7v5.8h-4.7zM68.5 135.4h4.7v5.8h-4.7zM145.7 135.4h4.7v5.8h-4.7zM102.8 140.8h4.7v5.8h-4.7zM98.5 146.3h4.7v5.8h-4.7zM64.2 151.7h4.7v5.8h-4.7zM184.3 151.7h4.7v5.8h-4.7zM201.5 157.1h4.7v5.8h-4.7zM201.5 162.6h4.7v5.8h-4.7zM162.9 168.0h4.7v5.8h-4.7zM180.1 168.0h9.0v5.8h-9.0zM192.9 168.0h9.0v5.8h-9.0zM205.8 168.0h4.7v5.8h-4.7zM162.9 178.8h4.7v5.8h-4.7zM171.5 178.8h4.7v5.8h-4.7zM201.5 178.8h4.7v5.8h-4.7zM162.9 184.2h9.0v5.8h-9.0zM210.1 184.2h4.7v5.8h-4.7zM223.0 184.2h4.7v5.8h-4.7zM47.0 189.7h4.7v5.8h-4.7zM167.2 189.7h4.7v5.8h-4.7zM180.1 189.7h4.7v5.8h-4.7zM47.0 195.1h4.7v5.8h-4.7zM64.2 195.1h4.7v5.8h-4.7zM89.9 195.1h4.7v5.8h-4.7zM107.1 195.1h4.7v5.8h-4.7zM180.1 195.1h4.7v5.8h-4.7zM55.6 200.5h13.3v5.8h-13.3zM85.6 200.5h4.7v5.8h-4.7zM102.8 200.5h4.7v5.8h-4.7zM111.4 200.5h4.7v5.8h-4.7zM120.0 200.5h4.7v5.8h-4.7zM235.8 200.5h4.7v5.8h-4.7z"/>
<path fill="#f10" d="M77.0 108.3h13.3v5.8h-13.3zM132.8 108.3h4.7v5.8h-4.7zM141.4 108.3h4.7v5.8h-4.7zM72.8 113.7h4.7v5.8h-4.7zM81.3 113.7h4.7v5.8h-4.7zM98.5 113.7h4.7v5.8h-4.7zM150.0 113.7h4.7v5.8h-4.7zM124.3 119.1h4.7v5.8h-4.7zM72.8 124.6h9.0v5.8h-9.0zM94.2 124.6h4.7v5.8h-4.7zM132.8 124.6h4.7v5.8h-4.7zM141.4 124.6h4.7v5.8h-4.7zM150.0 124.6h4.7v5.8h-4.7zM98.5 130.0h9.0v5.8h-9.0zM120.0 130.0h4.7v5.8h-4.7zM145.7 130.0h4.7v5.8h-4.7zM94.2 135.4h4.7v5.8h-4.7zM102.8 135.4h4.7v5.8h-4.7zM111.4 135.4h4.7v5.8h-4.7zM98.5 140.8h4.7v5.8h-4.7zM107.1 140.8h9.0v5.8h-9.0zM102.8 146.3h4.7v5.8h-4.7zM111.4 146.3h4.7v5.8h-4.7zM171.5 162.6h4.7v5.8h-4.7z"/>
<path fill="#f20" d="M89.9 108.3h4.7v5.8h-4.7zM115.7 108.3h17.6v5.8h-17.6zM137.1 108.3h4.7v5.8h-4.7zM68.5 119.1h4.7v5.8h-4.7zM85.6 119.1h9.0v5.8h-9.0zM120.0 119.1h4.7v5.8h-4.7zM68.5 124.6h4.7v5.8h-4.7zM81.3 124.6h9.0v5.8h-9.0zM150.0 130.0h4.7v5.8h-4.7zM150.0 135.4h4.7v5.8h-4.7zM115.7 140.8h4.7v5.8h-4.7zM180.1 151.7h4.7v5.8h-4.7zM192.9 151.7h4.7v5.8h-4.7zM171.5 168.0h9.0v5.8h-9.0zM201.5 168.0h4.7v5.8h-4.7z"/>
<path fill="#f40" d="M94.2 108.3h4.7v5.8h-4.7zM102.8 124.6h4.7v5.8h-4.7zM89.9 130.0h9.0v5.8h-9.0zM120.0 135.4h4.7v5.8h-4.7zM154.3 135.4h4.7v5.8h-4.7zM115.7 146.3h4.7v5.8h-4.7zM150.0 146.3h9.0v5.8h-9.0zM107.1 151.7h4.7v5.8h-4.7zM175.8 151.7h4.7v5.8h-4.7zM150.0 157.1h4.7v5.8h-4.7zM154.3 173.4h4.7v5.8h-4.7zM162.9 173.4h4.7v5.8h-4.7zM197.2 173.4h4.7v5.8h-4.7zM214.4 178.8h4.7v5.8h-4.7zM218.7 184.2h4.7v5.8h-4.7zM227.3 189.7h4.7v5.8h-4.7zM94.2 200.5h4.7v5.8h-4.7z"/>
<path fill="#f30" d="M68.5 113.7h4.7v5.8h-4.7zM89.9 124.6h4.7v5.8h-4.7zM120.0 124.6h4.7v5.8h-4.7zM68.5 130.0h9.0v5.8h-9.0zM72.8 135.4h4.7v5.8h-4.7zM107.1 135.4h4.7v5.8h-4.7zM72.8 140.8h4.7v5.8h-4.7zM150.0 140.8h9.0v5.8h-9.0zM111.4 151.7h4.7v5.8h-4.7zM188.6 151.7h4.7v5.8h-4.7zM175.8 157.1h4.7v5.8h-4.7zM197.2 157.1h4.7v5.8h-4.7zM197.2 162.6h4.7v5.8h-4.7zM171.5 173.4h4.7v5.8h-4.7zM201.5 173.4h9.0v5.8h-9.0zM205.8 178.8h4.7v5.8h-4.7zM218.7 189.7h9.0v5.8h-9.0z"/>
<path fill="#f00" d="M77.0 113.7h4.7v5.8h-4.7zM85.6 113.7h13.3v5.8h-13.3zM111.4 113.7h39.0v5.8h-39.0zM72.8 119.1h13.3v5.8h-13.3zM94.2 119.1h9.0v5.8h-9.0zM111.4 119.1h9.0v5.8h-9.0zM128.6 119.1h26.1v5.8h-26.1zM98.5 124.6h4.7v5.8h-4.7zM111.4 124.6h9.0v5.8h-9.0zM124.3 124.6h9.0v5.8h-9.0zM145.7 124.6h4.7v5.8h-4.7zM111.4 130.0h4.7v5.8h-4.7zM171.5 157.1h4.7v5.8h-4.7zM180.1 157.1h17.6v5.8h-17.6zM175.8 162.6h21.9v5.8h-21.9z"/>
<path fill="#f70" d="M107.1 113.7h4.7v5.8h-4.7zM287.3 113.7h4.7v5.8h-4.7zM4.1 119.1h4.7v5.8h-4.7zM12.7 119.1h4.7v5.8h-4.7zM265.9 119.1h4.7v5.8h-4.7zM8.4 124.6h9.0v5.8h-9.0zM141.4 130.0h4.7v5.8h-4.7zM154.3 130.0h4.7v5.8h-4.7zM64.2 135.4h4.7v5.8h-4.7zM64.2 140.8h9.0v5.8h-9.0zM64.2 146.3h4.7v5.8h-4.7zM145.7 146.3h4.7v5.8h-4.7zM72.8 151.7h4.7v5.8h-4.7zM171.5 151.7h4.7v5.8h-4.7zM64.2 157.1h9.0v5.8h-9.0zM107.1 157.1h4.7v5.8h-4.7zM68.5 162.6h4.7v5.8h-4.7zM107.1 162.6h4.7v5.8h-4.7zM167.2 168.0h4.7v5.8h-4.7zM167.2 173.4h4.7v5.8h-4.7zM210.1 173.4h4.7v5.8h-4.7zM158.6 178.8h4.7v5.8h-4.7zM210.1 178.8h4.7v5.8h-4.7zM214.4 184.2h4.7v5.8h-4.7zM111.4 189.7h4.7v5.8h-4.7zM124.3 189.7h4.7v5.8h-4.7zM132.8 189.7h4.7v5.8h-4.7zM162.9 189.7h4.7v5.8h-4.7zM175.8 189.7h4.7v5.8h-4.7zM214.4 189.7h4.7v5.8h-4.7zM17.0 195.1h9.0v5.8h-9.0zM102.8 195.1h4.7v5.8h-4.7zM111.4 195.1h4.7v5.8h-4.7zM120.0 195.1h9.0v5.8h-9.0zM162.9 195.1h4.7v5.8h-4.7zM175.8 195.1h4.7v5.8h-4.7zM235.8 195.1h4.7v5.8h-4.7zM47.0 200.5h4.7v5.8h-4.7zM68.5 200.5h9.0v5.8h-9.0zM107.1 200.5h4.7v5.8h-4.7zM115.7 200.5h4.7v5.8h-4.7zM128.6 200.5h4.7v5.8h-4.7zM180.1 200.5h4.7v5.8h-4.7zM227.3 200.5h4.7v5.8h-4.7zM55.6 206.0h13.3v5.8h-13.3zM85.6 206.0h4.7v5.8h-4.7zM128.6 206.0h4.7v5.8h-4.7z"/>
</g>
<g filter="url(#bl2)"><rect x="5.2" y="5.8" width="1.9" height="4.6" fill="#09f"/><rect x="18.0" y="5.8" width="2.1" height="4.6" fill="#0cf"/><rect x="52.8" y="5.8" width="2.2" height="4.6" fill="#0cf"/><rect x="190.3" y="5.8" width="2.2" height="4.6" fill="#09f"/><rect x="199.0" y="5.8" width="1.8" height="4.6" fill="#0cf"/><rect x="23.1" y="11.2" width="2.0" height="4.6" fill="#06e"/><rect x="190.0" y="11.2" width="1.8" height="4.6" fill="#0cf"/><rect x="203.3" y="11.2" width="2.2" height="4.6" fill="#09f"/><rect x="263.0" y="11.2" width="2.0" height="4.6" fill="#0cf"/><rect x="60.9" y="16.7" width="1.7" height="4.6" fill="#0cf"/><rect x="6.0" y="22.1" width="2.1" height="4.6" fill="#0cf"/><rect x="14.4" y="22.1" width="2.1" height="4.6" fill="#06e"/><rect x="168.6" y="22.1" width="1.9" height="4.6" fill="#0cf"/><rect x="10.2" y="27.5" width="1.9" height="4.6" fill="#0cf"/><rect x="160.1" y="27.5" width="2.3" height="4.6" fill="#0cf"/><rect x="220.7" y="27.5" width="1.9" height="4.6" fill="#06e"/><rect x="242.2" y="27.5" width="1.7" height="4.6" fill="#0cf"/><rect x="263.2" y="27.5" width="1.7" height="4.6" fill="#09f"/><rect x="134.4" y="32.9" width="1.6" height="4.6" fill="#06e"/><rect x="138.5" y="32.9" width="2.2" height="4.6" fill="#0cf"/><rect x="138.2" y="38.4" width="1.7" height="4.6" fill="#06e"/><rect x="163.9" y="38.4" width="2.0" height="4.6" fill="#06e"/><rect x="207.8" y="49.2" width="2.1" height="4.6" fill="#09f"/><rect x="73.8" y="54.6" width="1.9" height="4.6" fill="#09f"/><rect x="104.5" y="54.6" width="2.0" height="4.6" fill="#09f"/><rect x="224.6" y="54.6" width="1.7" height="4.6" fill="#0cf"/><rect x="57.1" y="60.1" width="1.6" height="4.6" fill="#09f"/><rect x="61.2" y="60.1" width="1.7" height="4.6" fill="#0cf"/><rect x="99.6" y="60.1" width="2.1" height="4.6" fill="#06e"/><rect x="173.1" y="60.1" width="1.7" height="4.6" fill="#0cf"/><rect x="39.7" y="65.5" width="1.7" height="4.6" fill="#09f"/><rect x="155.3" y="65.5" width="1.8" height="4.6" fill="#06e"/><rect x="14.4" y="70.9" width="1.7" height="4.6" fill="#0cf"/><rect x="156.2" y="70.9" width="1.9" height="4.6" fill="#0cf"/><rect x="202.8" y="76.4" width="1.6" height="4.6" fill="#06e"/><rect x="9.6" y="81.8" width="1.7" height="4.6" fill="#0cf"/><rect x="173.0" y="81.8" width="1.6" height="4.6" fill="#0cf"/><rect x="186.5" y="81.8" width="1.8" height="4.6" fill="#0cf"/><rect x="6.2" y="87.2" width="1.6" height="4.6" fill="#0cf"/><rect x="22.7" y="87.2" width="2.1" height="4.6" fill="#0cf"/><rect x="39.8" y="87.2" width="1.9" height="4.6" fill="#09f"/><rect x="99.9" y="87.2" width="2.0" height="4.6" fill="#0cf"/><rect x="245.8" y="87.2" width="1.9" height="4.6" fill="#0cf"/><rect x="14.6" y="92.6" width="1.9" height="4.6" fill="#09f"/><rect x="48.6" y="92.6" width="1.8" height="4.6" fill="#06e"/><rect x="229.5" y="92.6" width="2.1" height="4.6" fill="#0cf"/><rect x="246.2" y="92.6" width="1.9" height="4.6" fill="#06e"/><rect x="249.8" y="92.6" width="1.7" height="4.6" fill="#06e"/><rect x="293.6" y="92.6" width="1.6" height="4.6" fill="#06e"/><rect x="165.0" y="98.0" width="1.6" height="4.6" fill="#0cf"/><rect x="254.3" y="98.0" width="1.7" height="4.6" fill="#09f"/><rect x="173.3" y="103.5" width="2.0" height="4.6" fill="#0cf"/><rect x="250.7" y="103.5" width="1.9" height="4.6" fill="#0cf"/><rect x="263.0" y="103.5" width="1.6" height="4.6" fill="#09f"/><rect x="280.1" y="103.5" width="2.0" height="4.6" fill="#0cf"/><rect x="302.1" y="103.5" width="2.2" height="4.6" fill="#0cf"/><rect x="36.0" y="114.3" width="2.0" height="4.6" fill="#09f"/><rect x="258.6" y="114.3" width="1.8" height="4.6" fill="#0cf"/><rect x="189.7" y="119.8" width="2.0" height="4.6" fill="#09f"/><rect x="198.6" y="119.8" width="1.7" height="4.6" fill="#09f"/><rect x="22.7" y="130.6" width="1.9" height="4.6" fill="#09f"/><rect x="263.7" y="130.6" width="1.7" height="4.6" fill="#0cf"/><rect x="293.4" y="130.6" width="2.3" height="4.6" fill="#0cf"/><rect x="297.2" y="130.6" width="2.0" height="4.6" fill="#09f"/><rect x="190.4" y="141.4" width="2.3" height="4.6" fill="#09f"/><rect x="164.0" y="146.9" width="1.8" height="4.6" fill="#09f"/><rect x="1.6" y="152.3" width="1.6" height="4.6" fill="#0cf"/><rect x="121.3" y="152.3" width="1.9" height="4.6" fill="#09f"/><rect x="164.8" y="152.3" width="1.8" height="4.6" fill="#0cf"/><rect x="293.3" y="152.3" width="2.3" height="4.6" fill="#06e"/><rect x="232.6" y="163.2" width="1.7" height="4.6" fill="#0cf"/><rect x="142.4" y="174.0" width="1.9" height="4.6" fill="#06e"/><rect x="250.1" y="174.0" width="1.9" height="4.6" fill="#0cf"/><rect x="52.9" y="179.4" width="1.7" height="4.6" fill="#0cf"/><rect x="241.8" y="179.4" width="2.1" height="4.6" fill="#0cf"/><rect x="78.3" y="184.8" width="2.1" height="4.6" fill="#0cf"/><rect x="241.8" y="184.8" width="1.7" height="4.6" fill="#0cf"/><rect x="194.0" y="190.3" width="2.1" height="4.6" fill="#06e"/><rect x="255.0" y="195.7" width="2.0" height="4.6" fill="#06e"/><rect x="276.0" y="195.7" width="1.8" height="4.6" fill="#0cf"/><rect x="172.9" y="206.6" width="1.9" height="4.6" fill="#06e"/><rect x="31.3" y="212.0" width="2.0" height="4.6" fill="#0cf"/><rect x="36.0" y="212.0" width="1.9" height="4.6" fill="#0cf"/><rect x="91.9" y="212.0" width="1.8" height="4.6" fill="#09f"/><rect x="172.9" y="212.0" width="2.0" height="4.6" fill="#09f"/></g>
</svg>
<svg class="abs" style="left:0;top:0" width="900" height="557" viewBox="0 0 900 557">
<g font-family="Liberation Sans, sans-serif" font-size="8.8" fill="#3a3a3a">
<text x="373.2" y="518.3" text-anchor="middle">0.2</text>
<text x="406.6" y="518.3" text-anchor="middle">0.4</text>
<text x="440.0" y="518.3" text-anchor="middle">0.6</text>
<text x="473.4" y="518.3" text-anchor="middle">0.8</text>
<text x="506.8" y="518.3" text-anchor="middle">1</text>
<text x="540.2" y="518.3" text-anchor="middle">1.2</text>
<text x="573.6" y="518.3" text-anchor="middle">1.4</text>
<text x="607.0" y="518.3" text-anchor="middle">1.6</text>
<text x="640.4" y="518.3" text-anchor="middle">1.8</text>
<text x="348.6" y="509.1" text-anchor="end">150</text>
<text x="348.6" y="436.7" text-anchor="end">200</text>
<text x="348.6" y="364.3" text-anchor="end">250</text>
<text x="348.6" y="291.9" text-anchor="end">300</text>
<text x="506" y="528.5" text-anchor="middle" textLength="45">Time (Sec)</text>
<text transform="translate(329.3 397) rotate(-90)" text-anchor="middle" textLength="63.5">Frequency (Hz)</text>
</g></svg>
<div class="lb" style="left:676px;top:288px;width:95.5px;height:217.6px;border-color:#a3a4aa">
<div class="sel" style="left:0.5px;top:81.5px;width:82.5px;height:16px;background:#3399ff"></div>
<div class="sb" style="left:83px;top:0;width:12.5px;height:217px"></div>
<div class="thumb" style="left:84px;top:14.5px;width:10px;height:140px"></div>
<i class="grip" style="left:87px;top:82px"></i>
<i class="arr up" style="left:87px;top:6px"></i><i class="arr dn" style="left:87px;top:208.5px"></i>
<div class="abs" style="left:0;top:0;width:83px;height:217px;overflow:hidden">
<span class="t " style="left:0.80px;top:1.50px;font-size:14.30px;color:#363636;letter-spacing:-0.320px;">00:13.2, 220</span>
<span class="t " style="left:0.80px;top:17.67px;font-size:14.30px;color:#363636;letter-spacing:-0.320px;">00:44.0, 220</span>
<span class="t " style="left:0.80px;top:33.84px;font-size:14.30px;color:#363636;letter-spacing:-0.320px;">01:18.7, 220</span>
<span class="t " style="left:0.80px;top:50.01px;font-size:14.30px;color:#363636;letter-spacing:-0.320px;">01:48.0, 220</span>
<span class="t " style="left:0.80px;top:66.18px;font-size:14.30px;color:#363636;letter-spacing:-0.320px;">02:25.3, 220</span>
<span class="t " style="left:0.80px;top:82.35px;font-size:14.30px;color:#fff;letter-spacing:-0.320px;">03:00.6, 220</span>
<span class="t " style="left:0.80px;top:98.52px;font-size:14.30px;color:#363636;letter-spacing:-0.320px;">03:31.0, 220</span>
<span class="t " style="left:0.80px;top:114.69px;font-size:14.30px;color:#363636;letter-spacing:-0.320px;">04:07.1, 220</span>
<span class="t " style="left:0.80px;top:130.86px;font-size:14.30px;color:#363636;letter-spacing:-0.320px;">04:38.7, 220</span>
<span class="t " style="left:0.80px;top:147.03px;font-size:14.30px;color:#363636;letter-spacing:-0.320px;">05:09.9, 220</span>
<span class="t " style="left:0.80px;top:163.20px;font-size:14.30px;color:#363636;letter-spacing:-0.320px;">05:45.3, 220</span>
<span class="t " style="left:0.80px;top:179.37px;font-size:14.30px;color:#363636;letter-spacing:-0.320px;">06:16.4, 220</span>
<span class="t " style="left:0.80px;top:195.54px;font-size:14.30px;color:#363636;letter-spacing:-0.320px;">06:59.0, 220</span>
<span class="t " style="left:0.80px;top:211.71px;font-size:14.30px;color:#363636;letter-spacing:-0.320px;">07:33.6, 220</span>
</div></div>
<div class="btn" style="left:790.8px;top:289.4px;width:60.8px;height:46.6px"></div><span class="t " style="left:807.70px;top:307.37px;font-size:13.50px;color:#000;letter-spacing:0.814px;-webkit-text-stroke:0.12px #000;">Prev</span>
<div class="btn" style="left:790.8px;top:375.2px;width:60.8px;height:47.5px"></div><span class="t " style="left:807.80px;top:393.87px;font-size:13.50px;color:#000;letter-spacing:0.613px;-webkit-text-stroke:0.12px #000;">Play</span>
<div class="btn" style="left:790.8px;top:461.8px;width:60.8px;height:44.0px"></div><span class="t " style="left:807.60px;top:478.37px;font-size:13.50px;color:#000;letter-spacing:0.547px;-webkit-text-stroke:0.12px #000;">Next</span>
</body></html>
